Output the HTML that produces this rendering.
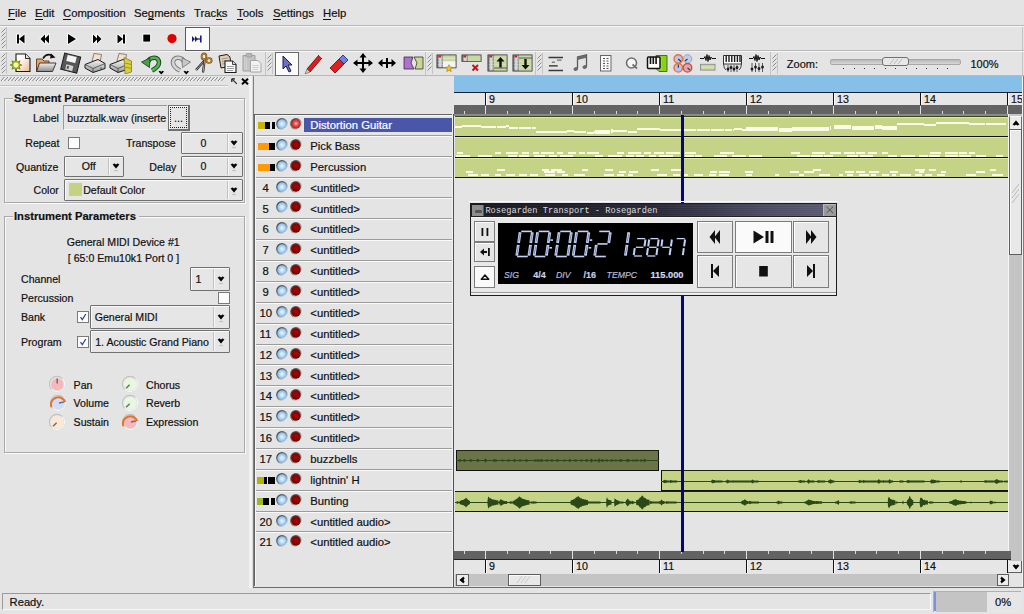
<!DOCTYPE html><html><head><meta charset="utf-8"><style>
html,body{margin:0;padding:0;}
body{width:1024px;height:614px;overflow:hidden;position:relative;background:#e4e4e4;font-family:"Liberation Sans",sans-serif;}
.t{position:absolute;white-space:nowrap;-webkit-text-stroke:0.2px currentColor;}
.r{position:absolute;box-sizing:border-box;}
u{text-decoration:none;border-bottom:1px solid currentColor;}
</style></head><body>
<div class="t" style="left:8.00px;top:5.98px;font-size:11.3px;line-height:15px;font-weight:normal;color:#111;font-family:'Liberation Sans', sans-serif;"><u>F</u>ile</div>
<div class="t" style="left:35.00px;top:5.98px;font-size:11.3px;line-height:15px;font-weight:normal;color:#111;font-family:'Liberation Sans', sans-serif;"><u>E</u>dit</div>
<div class="t" style="left:63.00px;top:5.98px;font-size:11.3px;line-height:15px;font-weight:normal;color:#111;font-family:'Liberation Sans', sans-serif;"><u>C</u>omposition</div>
<div class="t" style="left:134.00px;top:5.98px;font-size:11.3px;line-height:15px;font-weight:normal;color:#111;font-family:'Liberation Sans', sans-serif;">Se<u>g</u>ments</div>
<div class="t" style="left:194.00px;top:5.98px;font-size:11.3px;line-height:15px;font-weight:normal;color:#111;font-family:'Liberation Sans', sans-serif;">Trac<u>k</u>s</div>
<div class="t" style="left:237.00px;top:5.98px;font-size:11.3px;line-height:15px;font-weight:normal;color:#111;font-family:'Liberation Sans', sans-serif;"><u>T</u>ools</div>
<div class="t" style="left:273.00px;top:5.98px;font-size:11.3px;line-height:15px;font-weight:normal;color:#111;font-family:'Liberation Sans', sans-serif;"><u>S</u>ettings</div>
<div class="t" style="left:323.00px;top:5.98px;font-size:11.3px;line-height:15px;font-weight:normal;color:#111;font-family:'Liberation Sans', sans-serif;"><u>H</u>elp</div>
<div class="r" style="left:0px;top:25px;width:1024px;height:1px;background:#b9b9b9;"></div>
<div class="r" style="left:0px;top:26px;width:1024px;height:1px;background:#f6f6f6;"></div>
<div class="r" style="left:0px;top:50px;width:1024px;height:1px;background:#b9b9b9;"></div>
<div class="r" style="left:0px;top:51px;width:1024px;height:1px;background:#f6f6f6;"></div>
<div class="r" style="left:0px;top:75px;width:1024px;height:1px;background:#b9b9b9;"></div>
<svg class="r" style="left:1px;top:28px;" width="5" height="20" viewBox="0 0 5 20"><line x1="0.5" y1="4.5" x2="4.5" y2="0.5" stroke="#8a8a8a" stroke-width="1"/><line x1="0.5" y1="8.5" x2="4.5" y2="4.5" stroke="#8a8a8a" stroke-width="1"/><line x1="0.5" y1="12.5" x2="4.5" y2="8.5" stroke="#8a8a8a" stroke-width="1"/><line x1="0.5" y1="16.5" x2="4.5" y2="12.5" stroke="#8a8a8a" stroke-width="1"/><line x1="0.5" y1="20.5" x2="4.5" y2="16.5" stroke="#8a8a8a" stroke-width="1"/></svg>
<div class="r" style="left:6px;top:27px;width:1px;height:22px;background:#c4c4c4;"></div>
<svg class="r" style="left:1px;top:53px;" width="5" height="20" viewBox="0 0 5 20"><line x1="0.5" y1="4.5" x2="4.5" y2="0.5" stroke="#8a8a8a" stroke-width="1"/><line x1="0.5" y1="8.5" x2="4.5" y2="4.5" stroke="#8a8a8a" stroke-width="1"/><line x1="0.5" y1="12.5" x2="4.5" y2="8.5" stroke="#8a8a8a" stroke-width="1"/><line x1="0.5" y1="16.5" x2="4.5" y2="12.5" stroke="#8a8a8a" stroke-width="1"/><line x1="0.5" y1="20.5" x2="4.5" y2="16.5" stroke="#8a8a8a" stroke-width="1"/></svg>
<div class="r" style="left:6px;top:52px;width:1px;height:22px;background:#c4c4c4;"></div>
<svg class="r" style="left:14px;top:31px;" width="14" height="16" viewBox="0 0 14 16"><g stroke="#fff" stroke-width="2" stroke-linejoin="round" fill="#fff" opacity="0.9"><rect x="3" y="3.5" width="2" height="9"/><path d="M5 8 L10.5 3.5 L10.5 12.5 Z"/></g><g fill="#000"><rect x="3" y="3.5" width="2" height="9"/><path d="M5 8 L10.5 3.5 L10.5 12.5 Z"/></g></svg>
<svg class="r" style="left:38px;top:31px;" width="14" height="16" viewBox="0 0 14 16"><g stroke="#fff" stroke-width="2" stroke-linejoin="round" fill="#fff" opacity="0.9"><path d="M2.5 8 L7 3.5 L7 12.5 Z"/><path d="M6.5 8 L11 3.5 L11 12.5 Z"/></g><g fill="#000"><path d="M2.5 8 L7 3.5 L7 12.5 Z"/><path d="M6.5 8 L11 3.5 L11 12.5 Z"/></g></svg>
<svg class="r" style="left:65px;top:31px;" width="14" height="16" viewBox="0 0 14 16"><g stroke="#fff" stroke-width="2" stroke-linejoin="round" fill="#fff" opacity="0.9"><path d="M3 3 L11 8 L3 13 Z"/></g><g fill="#000"><path d="M3 3 L11 8 L3 13 Z"/></g></svg>
<svg class="r" style="left:90px;top:31px;" width="14" height="16" viewBox="0 0 14 16"><g stroke="#fff" stroke-width="2" stroke-linejoin="round" fill="#fff" opacity="0.9"><path d="M3 3.5 L7.5 8 L3 12.5 Z"/><path d="M7 3.5 L11.5 8 L7 12.5 Z"/></g><g fill="#000"><path d="M3 3.5 L7.5 8 L3 12.5 Z"/><path d="M7 3.5 L11.5 8 L7 12.5 Z"/></g></svg>
<svg class="r" style="left:114px;top:31px;" width="14" height="16" viewBox="0 0 14 16"><g stroke="#fff" stroke-width="2" stroke-linejoin="round" fill="#fff" opacity="0.9"><path d="M3.5 3.5 L9 8 L3.5 12.5 Z"/><rect x="9" y="3.5" width="2" height="9"/></g><g fill="#000"><path d="M3.5 3.5 L9 8 L3.5 12.5 Z"/><rect x="9" y="3.5" width="2" height="9"/></g></svg>
<svg class="r" style="left:140px;top:31px;" width="14" height="16" viewBox="0 0 14 16"><g stroke="#fff" stroke-width="2" stroke-linejoin="round" fill="#fff" opacity="0.9"><rect x="3.3" y="3.6" width="6.8" height="7"/></g><g fill="#000"><rect x="3.3" y="3.6" width="6.8" height="7"/></g></svg>
<svg class="r" style="left:165px;top:31px;" width="14" height="16" viewBox="0 0 14 16"><circle cx="7" cy="7.6" r="4.6" fill="#e00000"/></svg>
<div class="r" style="left:185px;top:27px;width:25px;height:23.5px;background:#fafafa;border:1px solid #5a5a5a;"></div>
<svg class="r" style="left:190px;top:32px;" width="16" height="14" viewBox="0 0 16 14"><path d="M2 4 L5 7 L2 10 Z M5 4 L8 7 L5 10 Z" fill="#1a2070"/><rect x="5" y="7" width="6" height="0.01"/><line x1="6" y1="7" x2="10" y2="7" stroke="#1a2070" stroke-width="1.2"/><rect x="10" y="3.5" width="1.6" height="7" fill="#1a2070"/></svg>
<svg class="r" style="left:10px;top:52px;" width="22" height="22" viewBox="0 0 22 22"><defs><linearGradient id="pg" x1="0" y1="0" x2="1" y2="1"><stop offset="0.3" stop-color="#ffffff"/><stop offset="1" stop-color="#f0b890"/></linearGradient></defs><path d="M6 2 H15.5 L20 6.5 V19.5 H6 Z" fill="url(#pg)" stroke="#1a1a1a" stroke-width="1.1"/><path d="M15.5 2 V6.5 H20" fill="#e8e8e8" stroke="#1a1a1a" stroke-width="0.9"/><polygon points="11.80,13.00 8.96,14.22 10.10,17.10 7.22,15.96 6.00,18.80 4.78,15.96 1.90,17.10 3.04,14.22 0.20,13.00 3.04,11.78 1.90,8.90 4.78,10.04 6.00,7.20 7.22,10.04 10.10,8.90 8.96,11.78" fill="#b8c818" stroke="#5a6a00" stroke-width="0.7"/><circle cx="6" cy="13" r="2.4" fill="#f8ffb0"/></svg>
<svg class="r" style="left:35px;top:52px;" width="22" height="22" viewBox="0 0 22 22"><defs><linearGradient id="fg" x1="0" y1="0" x2="0" y2="1"><stop offset="0" stop-color="#f0f0f0"/><stop offset="1" stop-color="#8a8a8a"/></linearGradient></defs><path d="M1.5 7 H7 L9 9 H14 V18 L1.5 19.5 Z" fill="#e8a464" stroke="#5a3a1a" stroke-width="0.9"/><path d="M4.5 11 H21 L17.5 19.5 H1.5 Z" fill="url(#fg)" stroke="#2a2a2a" stroke-width="0.9"/><path d="M8 6.5 Q12 0.5 17.5 4" stroke="#111" stroke-width="1.6" fill="none"/><path d="M16 1.5 L20.5 5.5 L15 6.5 Z" fill="#111"/></svg>
<svg class="r" style="left:60px;top:52px;" width="22" height="22" viewBox="0 0 22 22"><g transform="rotate(14 11 11)"><rect x="2.5" y="3" width="16.5" height="16.5" fill="#585858" stroke="#1a1a1a" stroke-width="1"/><rect x="5.5" y="3.5" width="10" height="7" fill="#f4f4f4" stroke="#333" stroke-width="0.5"/><rect x="6.5" y="13" width="8" height="6" fill="#d4d4d4" stroke="#333" stroke-width="0.5"/><rect x="8" y="14.5" width="2" height="3" fill="#555"/></g></svg>
<svg class="r" style="left:84px;top:52px;" width="24" height="22" viewBox="0 0 24 22"><defs><linearGradient id="prg" x1="0" y1="0" x2="0" y2="1"><stop offset="0" stop-color="#f4f4f4"/><stop offset="1" stop-color="#9a9a9a"/></linearGradient></defs><path d="M8 9 L10 1.5 L17.5 2.5 L16 10.5 Z" fill="#f6e0c8" stroke="#6a6a6a" stroke-width="0.8"/><path d="M1 12.5 L14 7.5 L21 11.5 L21 16.5 L9 20.5 L1 16 Z" fill="url(#prg)" stroke="#1a1a1a" stroke-width="1"/><path d="M1 12.5 L9 16.5 L21 11.5 M9 16.5 V20.5" stroke="#444" stroke-width="0.8" fill="none"/><rect x="16" y="15.5" width="2" height="1.3" fill="#20a040"/></svg>
<svg class="r" style="left:109px;top:52px;" width="24" height="22" viewBox="0 0 24 22"><defs><linearGradient id="prg" x1="0" y1="0" x2="0" y2="1"><stop offset="0" stop-color="#f4f4f4"/><stop offset="1" stop-color="#9a9a9a"/></linearGradient></defs><path d="M8 9 L10 1.5 L17.5 2.5 L16 10.5 Z" fill="#f6e0c8" stroke="#6a6a6a" stroke-width="0.8"/><path d="M1 12.5 L14 7.5 L21 11.5 L21 16.5 L9 20.5 L1 16 Z" fill="url(#prg)" stroke="#1a1a1a" stroke-width="1"/><path d="M1 12.5 L9 16.5 L21 11.5 M9 16.5 V20.5" stroke="#444" stroke-width="0.8" fill="none"/><rect x="16" y="15.5" width="2" height="1.3" fill="#20a040"/><path d="M15 5.5 L22.5 9 V20 L16 22 Z" fill="#d8d040" stroke="#7a7010" stroke-width="0.7"/><path d="M16 11 L22.5 12.5 M16 15 L22.5 16.5" stroke="#8a8010" stroke-width="0.7"/></svg>
<svg class="r" style="left:140px;top:53px;" width="26" height="23" viewBox="0 0 26 23"><path d="M7.5 9.5 C10 3 19.5 3 19 10 C18.5 14 15 16 12 17.5" stroke="#1a4a1a" stroke-width="4.6" fill="none"/><path d="M7.5 9.5 C10 3 19.5 3 19 10 C18.5 14 15 16 12 17.5" stroke="#58b058" stroke-width="2.6" fill="none"/><path d="M1.5 9 L10 5 L9.5 14.5 Z" fill="#48a048" stroke="#1a4a1a" stroke-width="0.9" stroke-linejoin="round"/><path d="M18.5 18.6 L20 17.8 L21.3 18.8 L22.6 17.8 L24 18.6 L21.3 21.6 Z" fill="#000"/></svg>
<svg class="r" style="left:166px;top:53px;" width="26" height="23" viewBox="0 0 26 23"><path d="M18.5 9.5 C16 3 6.5 3 7 10 C7.5 14 11 16 14 17.5" stroke="#7a7a7a" stroke-width="4.6" fill="none"/><path d="M18.5 9.5 C16 3 6.5 3 7 10 C7.5 14 11 16 14 17.5" stroke="#d4d4d4" stroke-width="2.6" fill="none"/><path d="M24.5 9 L16 5 L16.5 14.5 Z" fill="#c8c8c8" stroke="#7a7a7a" stroke-width="0.9" stroke-linejoin="round"/><path d="M17.5 18.6 L19 17.8 L20.3 18.8 L21.6 17.8 L23 18.6 L20.3 21.6 Z" fill="#000"/></svg>
<svg class="r" style="left:193px;top:52px;" width="20" height="22" viewBox="0 0 20 22"><path d="M3 18 L12 8" stroke="#1a1a1a" stroke-width="2.2"/><path d="M3 18 L12 8" stroke="#d8d8d8" stroke-width="0.8"/><path d="M10 20.5 L11.5 9" stroke="#1a1a1a" stroke-width="2.2"/><path d="M10 20.5 L11.5 9" stroke="#c8c8c8" stroke-width="0.8"/><ellipse cx="11" cy="4.5" rx="2.4" ry="3" fill="none" stroke="#7a4a08" stroke-width="1.8"/><ellipse cx="16" cy="8.5" rx="2.6" ry="2.4" fill="none" stroke="#7a4a08" stroke-width="1.8"/><ellipse cx="11" cy="4.5" rx="2.4" ry="3" fill="none" stroke="#d8a040" stroke-width="0.7"/><ellipse cx="16" cy="8.5" rx="2.6" ry="2.4" fill="none" stroke="#d8a040" stroke-width="0.7"/></svg>
<svg class="r" style="left:217px;top:53px;" width="22" height="22" viewBox="0 0 22 22"><path d="M2 3 L10 1.5 L13 4 L14 13 L4 15 Z" fill="#e0d0b8" stroke="#1a1a1a" stroke-width="1"/><path d="M4.5 6 L11 5 M5 8.5 L11.5 7.5 M5 11 L12 10" stroke="#8a7a6a" stroke-width="0.7"/><path d="M8 8 H15.5 L19 11.5 V19.5 H8 Z" fill="#fafafa" stroke="#1a1a1a" stroke-width="1.1"/><path d="M15.5 8 V11.5 H19" fill="#ddd" stroke="#1a1a1a" stroke-width="0.8"/><path d="M10 13.5 H17 M10 15.5 H17 M10 17.5 H16" stroke="#777" stroke-width="0.7"/></svg>
<svg class="r" style="left:241px;top:52px;" width="22" height="22" viewBox="0 0 22 22"><path d="M2 3.5 H14 V19 H2 Z" fill="#c4c4c4" stroke="#a0a0a0" stroke-width="1"/><rect x="5" y="1.5" width="6" height="3.5" rx="1" fill="#b8b8b8" stroke="#999" stroke-width="0.8"/><path d="M3.5 5 V18 M5.5 5 V18" stroke="#d8d8d8" stroke-width="0.7"/><path d="M9.5 8.5 H17 L20 11.5 V20 H9.5 Z" fill="#f2f2f2" stroke="#a4a4a4" stroke-width="1"/><path d="M11.5 13.5 H18 M11.5 15.5 H18 M11.5 17.5 H17" stroke="#c0c0c0" stroke-width="0.7"/></svg>
<div class="r" style="left:265px;top:52px;width:1px;height:23px;background:#c4c4c4;"></div>
<svg class="r" style="left:267px;top:54px;" width="5" height="19" viewBox="0 0 5 19"><line x1="0.5" y1="4.5" x2="4.5" y2="0.5" stroke="#8a8a8a" stroke-width="1"/><line x1="0.5" y1="8.5" x2="4.5" y2="4.5" stroke="#8a8a8a" stroke-width="1"/><line x1="0.5" y1="12.5" x2="4.5" y2="8.5" stroke="#8a8a8a" stroke-width="1"/><line x1="0.5" y1="16.5" x2="4.5" y2="12.5" stroke="#8a8a8a" stroke-width="1"/></svg>
<div class="r" style="left:272px;top:53px;width:1px;height:21px;background:#c4c4c4;"></div>
<div class="r" style="left:275px;top:52px;width:24px;height:24px;background:#fbfbfb;border:1px solid #6a6a6a;"></div>
<svg class="r" style="left:276px;top:52px;" width="22" height="22" viewBox="0 0 22 22"><path d="M7 4 L7 17 L10 14 L13 20 L15 19 L12 13 L16 13 Z" fill="#6a70c8" stroke="#1a1a40" stroke-width="1" stroke-linejoin="round"/></svg>
<svg class="r" style="left:302px;top:52px;" width="22" height="22" viewBox="0 0 22 22"><path d="M5 17 L17 3 L20 6 L8 20 Z" fill="#d82020" stroke="#6a0000" stroke-width="0.8"/><path d="M5 17 L8 20 L3 22 Z" fill="#e8c8a0" stroke="#555" stroke-width="0.6"/><path d="M17 3 L20 6" stroke="#fff" stroke-width="0.8"/></svg>
<svg class="r" style="left:327px;top:52px;" width="22" height="22" viewBox="0 0 22 22"><path d="M3 16 L12 7 L17 12 L8 21 Z" fill="#e02020" stroke="#700" stroke-width="0.8"/><path d="M12 7 L16 3 L21 8 L17 12 Z" fill="#7080e8" stroke="#223" stroke-width="0.8"/></svg>
<svg class="r" style="left:352px;top:52px;" width="22" height="22" viewBox="0 0 22 22"><path d="M11 2 V20 M2 11 H20" stroke="#000" stroke-width="2"/><path d="M11 1 L7.5 5.5 H14.5 Z M11 21 L7.5 16.5 H14.5 Z M1 11 L5.5 7.5 V14.5 Z M21 11 L16.5 7.5 V14.5 Z" fill="#000"/></svg>
<svg class="r" style="left:376px;top:52px;" width="22" height="22" viewBox="0 0 22 22"><path d="M3 11 H19" stroke="#000" stroke-width="2"/><path d="M2 11 L6.5 7 V15 Z M20 11 L15.5 7 V15 Z" fill="#000"/><path d="M11 6 V16" stroke="#000" stroke-width="2"/></svg>
<svg class="r" style="left:402px;top:52px;" width="22" height="22" viewBox="0 0 22 22"><path d="M2 5 H11 L9 11 L12 17 H2 Z" fill="#b070d0" stroke="#333" stroke-width="0.8"/><path d="M12 5 H21 V17 H13 L15 11 Z" fill="#c8d890" stroke="#333" stroke-width="0.8"/></svg>
<div class="r" style="left:425px;top:52px;width:1px;height:23px;background:#c4c4c4;"></div>
<svg class="r" style="left:427px;top:54px;" width="5" height="19" viewBox="0 0 5 19"><line x1="0.5" y1="4.5" x2="4.5" y2="0.5" stroke="#8a8a8a" stroke-width="1"/><line x1="0.5" y1="8.5" x2="4.5" y2="4.5" stroke="#8a8a8a" stroke-width="1"/><line x1="0.5" y1="12.5" x2="4.5" y2="8.5" stroke="#8a8a8a" stroke-width="1"/><line x1="0.5" y1="16.5" x2="4.5" y2="12.5" stroke="#8a8a8a" stroke-width="1"/></svg>
<div class="r" style="left:432px;top:53px;width:1px;height:21px;background:#c4c4c4;"></div>
<svg class="r" style="left:436px;top:54px;" width="22" height="22" viewBox="0 0 22 22"><defs><linearGradient id="tg" x1="0" y1="0" x2="1" y2="0"><stop offset="0" stop-color="#5a5a5a"/><stop offset="0.5" stop-color="#e8e8e8"/><stop offset="1" stop-color="#8a8a8a"/></linearGradient></defs><rect x="1" y="1.0" width="6" height="3" fill="url(#tg)"/><rect x="1" y="4.2" width="6" height="3" fill="url(#tg)"/><rect x="1" y="7.4" width="6" height="3" fill="url(#tg)"/><rect x="1" y="10.6" width="6" height="3" fill="url(#tg)"/><rect x="1" y="1" width="19" height="12.8" fill="none" stroke="#5a5a5a" stroke-width="0.8"/><rect x="2.5" y="1.3" width="2.5" height="2.2" fill="#d02020"/><rect x="7" y="1" width="13" height="6.4" fill="#c8d8a0"/><path d="M7 4.2 H20" stroke="#e8f0d0" stroke-width="0.8"/><rect x="7" y="7.4" width="13" height="6.4" fill="#f4f4f4"/><rect x="1" y="1" width="19" height="12.8" fill="none" stroke="#5a5a5a" stroke-width="0.8"/><polygon points="16.80,14.50 14.46,15.56 14.17,18.11 12.44,16.21 9.93,16.73 11.20,14.50 9.93,12.27 12.44,12.79 14.17,10.89 14.46,13.44" fill="#f0c020" stroke="#a07000" stroke-width="0.5" transform="rotate(-18 13 14.5)"/></svg>
<svg class="r" style="left:461px;top:54px;" width="22" height="22" viewBox="0 0 22 22"><defs><linearGradient id="tg" x1="0" y1="0" x2="1" y2="0"><stop offset="0" stop-color="#5a5a5a"/><stop offset="0.5" stop-color="#e8e8e8"/><stop offset="1" stop-color="#8a8a8a"/></linearGradient></defs><rect x="1" y="1.0" width="6" height="3" fill="url(#tg)"/><rect x="1" y="4.2" width="6" height="3" fill="url(#tg)"/><rect x="1" y="1" width="19" height="6.4" fill="none" stroke="#5a5a5a" stroke-width="0.8"/><rect x="2.5" y="1.3" width="2.5" height="2.2" fill="#d02020"/><rect x="7" y="1" width="13" height="6.4" fill="#c8d8a0"/><rect x="1" y="1" width="19" height="6.4" fill="none" stroke="#5a5a5a" stroke-width="0.8"/><path d="M11.5 11 L17 16.5 M17 11 L11.5 16.5" stroke="#d01010" stroke-width="2"/></svg>
<svg class="r" style="left:487px;top:54px;" width="22" height="20" viewBox="0 0 22 20"><defs><linearGradient id="tg" x1="0" y1="0" x2="1" y2="0"><stop offset="0" stop-color="#5a5a5a"/><stop offset="0.5" stop-color="#e8e8e8"/><stop offset="1" stop-color="#8a8a8a"/></linearGradient></defs><rect x="1" y="1.0" width="6" height="3" fill="url(#tg)"/><rect x="1" y="4.2" width="6" height="3" fill="url(#tg)"/><rect x="1" y="7.4" width="6" height="3" fill="url(#tg)"/><rect x="1" y="10.6" width="6" height="3" fill="url(#tg)"/><rect x="1" y="13.8" width="6" height="3" fill="url(#tg)"/><rect x="1" y="1" width="19" height="16.0" fill="none" stroke="#5a5a5a" stroke-width="0.8"/><rect x="2.5" y="1.3" width="2.5" height="2.2" fill="#d02020"/><rect x="7" y="1" width="13" height="16" fill="#c8d8a0"/><path d="M7 4.2 H20 M7 7.4 H20 M7 10.6 H20 M7 13.8 H20" stroke="#d8e4b8" stroke-width="0.6"/><rect x="1" y="1" width="19" height="16" fill="none" stroke="#5a5a5a" stroke-width="0.8"/><path d="M13.5 3 L9.5 7.5 H12.3 V13.5 H14.7 V7.5 H17.5 Z" fill="#111"/><path d="M7 14 H20" stroke="#333" stroke-width="0.8"/></svg>
<svg class="r" style="left:512px;top:54px;" width="22" height="20" viewBox="0 0 22 20"><defs><linearGradient id="tg" x1="0" y1="0" x2="1" y2="0"><stop offset="0" stop-color="#5a5a5a"/><stop offset="0.5" stop-color="#e8e8e8"/><stop offset="1" stop-color="#8a8a8a"/></linearGradient></defs><rect x="1" y="1.0" width="6" height="3" fill="url(#tg)"/><rect x="1" y="4.2" width="6" height="3" fill="url(#tg)"/><rect x="1" y="7.4" width="6" height="3" fill="url(#tg)"/><rect x="1" y="10.6" width="6" height="3" fill="url(#tg)"/><rect x="1" y="13.8" width="6" height="3" fill="url(#tg)"/><rect x="1" y="1" width="19" height="16.0" fill="none" stroke="#5a5a5a" stroke-width="0.8"/><rect x="2.5" y="1.3" width="2.5" height="2.2" fill="#d02020"/><rect x="7" y="1" width="13" height="16" fill="#c8d8a0"/><path d="M7 4.2 H20 M7 7.4 H20 M7 10.6 H20 M7 13.8 H20" stroke="#d8e4b8" stroke-width="0.6"/><rect x="1" y="1" width="19" height="16" fill="none" stroke="#5a5a5a" stroke-width="0.8"/><path d="M13.5 15.5 L9.5 11 H12.3 V5 H14.7 V11 H17.5 Z" fill="#111"/><path d="M7 4 H20" stroke="#333" stroke-width="0.8"/></svg>
<div class="r" style="left:535px;top:52px;width:1px;height:23px;background:#c4c4c4;"></div>
<svg class="r" style="left:537px;top:54px;" width="5" height="19" viewBox="0 0 5 19"><line x1="0.5" y1="4.5" x2="4.5" y2="0.5" stroke="#8a8a8a" stroke-width="1"/><line x1="0.5" y1="8.5" x2="4.5" y2="4.5" stroke="#8a8a8a" stroke-width="1"/><line x1="0.5" y1="12.5" x2="4.5" y2="8.5" stroke="#8a8a8a" stroke-width="1"/><line x1="0.5" y1="16.5" x2="4.5" y2="12.5" stroke="#8a8a8a" stroke-width="1"/></svg>
<div class="r" style="left:542px;top:53px;width:1px;height:21px;background:#c4c4c4;"></div>
<svg class="r" style="left:546px;top:52px;" width="20" height="22" viewBox="0 0 20 22"><path d="M2.5 5.5 H17 M2.5 18.5 H17" stroke="#3a3a3a" stroke-width="1.4"/><rect x="11" y="7.5" width="4.5" height="1.3" fill="#777"/><rect x="5.8" y="9.6" width="3.2" height="1.2" fill="#666"/><rect x="3" y="13" width="8.7" height="1.7" fill="#555"/></svg>
<svg class="r" style="left:572px;top:52px;" width="18" height="22" viewBox="0 0 18 22"><path d="M5.5 16.5 V5 L14.5 2.8 V14.5" stroke="#5a5a5a" stroke-width="1.3" fill="none"/><path d="M5.5 5 L14.5 2.8 V5.8 L5.5 8 Z" fill="#6a6a6a"/><ellipse cx="3.8" cy="17" rx="2.4" ry="1.8" fill="#6a6a6a" transform="rotate(-20 3.8 17)"/><ellipse cx="12.8" cy="15" rx="2.4" ry="1.8" fill="#6a6a6a" transform="rotate(-20 12.8 15)"/></svg>
<svg class="r" style="left:598px;top:52px;" width="16" height="22" viewBox="0 0 16 22"><rect x="2.5" y="3.5" width="10.5" height="15.5" fill="#fafafa" stroke="#666" stroke-width="1"/><path d="M5 6.5 H7 M8.5 6.5 H10.5 M5 9 H7 M8.5 9 H10.5 M5 11.5 H7 M9 11.5 H10.5 M5 14 H7 M8.5 14 H10.5 M5 16.5 H7 M8.5 16.5 H10.5" stroke="#555" stroke-width="1.1"/></svg>
<svg class="r" style="left:622px;top:52px;" width="18" height="22" viewBox="0 0 18 22"><circle cx="9.5" cy="11" r="5" fill="#f6f6f6" stroke="#707070" stroke-width="1.6"/><path d="M10.5 12.5 L15 16.5" stroke="#707070" stroke-width="1.8"/></svg>
<svg class="r" style="left:646px;top:52px;" width="22" height="22" viewBox="0 0 22 22"><path d="M10 3.5 H21 V19.5 H13 L10.5 17 Z" fill="#8ad01a" stroke="#3a6a08" stroke-width="0.9"/><path d="M12 5 V18 M15 5 V18" stroke="#b8f040" stroke-width="0.8"/><rect x="1.5" y="5" width="12.5" height="11.5" rx="1" fill="#fff" stroke="#111" stroke-width="1.5"/><path d="M4.5 5 V12 M7.3 5 V12 M10.1 5 V12" stroke="#111" stroke-width="1.6"/></svg>
<svg class="r" style="left:672px;top:52px;" width="22" height="22" viewBox="0 0 22 22"><circle cx="6.3" cy="7" r="4.3" fill="#b8c4e8" stroke="#e8703a" stroke-width="1.4"/><circle cx="15.5" cy="7" r="4.3" fill="#c0cce8" stroke="#9aa4c0" stroke-width="1"/><circle cx="6.3" cy="15.8" r="4.3" fill="#b8c4e8" stroke="#e8703a" stroke-width="1.4"/><circle cx="15.5" cy="15.8" r="4.3" fill="#d8a8b8" stroke="#e04a3a" stroke-width="1.4"/><path d="M6.3 7 L9 9.5 M15.5 7 L13 9 M6.3 15.8 L6.3 12.5 M15.5 15.8 L18 18" stroke="#333" stroke-width="1.1"/></svg>
<svg class="r" style="left:699px;top:52px;" width="18" height="22" viewBox="0 0 18 22"><path d="M1 6.5 H5 L6 4.5 L7 8.5 L8 2.5 L9 9.5 L10 3.5 L11 8 L12 5 L13 6.5 H17" stroke="#111" stroke-width="1" fill="none"/><rect x="1.5" y="12.3" width="14.5" height="5.8" fill="#c8d8a0" stroke="#8a8a8a" stroke-width="0.9"/><path d="M2 15.2 H15.5" stroke="#e0ecc8" stroke-width="0.8"/></svg>
<svg class="r" style="left:722px;top:52px;" width="22" height="22" viewBox="0 0 22 22"><path d="M1.5 3.5 H19.5 V12 H1.5 Z" fill="#fff" stroke="#333" stroke-width="1"/><path d="M4.2 3.5 V10 M7 3.5 V10 M9.8 3.5 V10 M12.6 3.5 V10 M15.4 3.5 V10 M18 3.5 V10" stroke="#1a1a1a" stroke-width="1.4"/><path d="M1.5 12 Q2 17 4 18 M19.5 12 Q19 17 17 18" stroke="#333" stroke-width="0.9" fill="none"/><path d="M6 13 V20 M9 13 V20 M12 13 V20 M15 13 V20" stroke="#333" stroke-width="0.8"/><ellipse cx="6" cy="17" rx="1.4" ry="1.6" fill="#1a1a1a"/><ellipse cx="9" cy="15.5" rx="1.4" ry="1.6" fill="#1a1a1a"/><ellipse cx="12" cy="17" rx="1.4" ry="1.6" fill="#1a1a1a"/><ellipse cx="15" cy="15.5" rx="1.4" ry="1.6" fill="#1a1a1a"/></svg>
<svg class="r" style="left:748px;top:52px;" width="20" height="22" viewBox="0 0 20 22"><path d="M1 6.5 H5 L6 4.5 L7 8.5 L8 2.5 L9 9.5 L10 3.5 L11 8 L12 5 L13 6.5 H17" stroke="#111" stroke-width="1" fill="none"/><path d="M4 11 V20 M7.5 11 V20 M11 11 V20 M14.5 11 V20" stroke="#333" stroke-width="0.8"/><ellipse cx="4" cy="17" rx="1.4" ry="1.6" fill="#1a1a1a"/><ellipse cx="7.5" cy="15" rx="1.4" ry="1.6" fill="#1a1a1a"/><ellipse cx="11" cy="16.5" rx="1.4" ry="1.6" fill="#1a1a1a"/><ellipse cx="14.5" cy="15" rx="1.4" ry="1.6" fill="#1a1a1a"/></svg>
<div class="r" style="left:770px;top:52px;width:1px;height:23px;background:#c4c4c4;"></div>
<svg class="r" style="left:772px;top:54px;" width="5" height="19" viewBox="0 0 5 19"><line x1="0.5" y1="4.5" x2="4.5" y2="0.5" stroke="#8a8a8a" stroke-width="1"/><line x1="0.5" y1="8.5" x2="4.5" y2="4.5" stroke="#8a8a8a" stroke-width="1"/><line x1="0.5" y1="12.5" x2="4.5" y2="8.5" stroke="#8a8a8a" stroke-width="1"/><line x1="0.5" y1="16.5" x2="4.5" y2="12.5" stroke="#8a8a8a" stroke-width="1"/></svg>
<div class="r" style="left:777px;top:53px;width:1px;height:21px;background:#c4c4c4;"></div>
<div class="t" style="left:786.80px;top:57.39px;font-size:11.0px;line-height:14px;font-weight:normal;color:#111;font-family:'Liberation Sans', sans-serif;">Zoom:</div>
<div class="r" style="left:830px;top:59px;width:131px;height:6px;background:#c8c8c8;border:1px solid #a8a8a8;border-radius:2px;background:linear-gradient(#b8b8b8,#d8d8d8);"></div>
<div class="r" style="left:882px;top:57px;width:27px;height:9px;background:#e8e8e8;border:1px solid #707070;border-radius:3px;"></div>
<svg class="r" style="left:886px;top:58px;" width="20" height="7" viewBox="0 0 20 7"><path d="M4 6 L8 1 M8 6 L12 1 M12 6 L16 1" stroke="#aaa" stroke-width="0.8"/></svg>
<div class="r" style="left:843px;top:68px;width:1px;height:1px;background:#333;"></div>
<div class="r" style="left:854px;top:68px;width:1px;height:1px;background:#333;"></div>
<div class="r" style="left:864px;top:68px;width:1px;height:1px;background:#333;"></div>
<div class="r" style="left:874px;top:68px;width:1px;height:1px;background:#333;"></div>
<div class="r" style="left:885px;top:68px;width:1px;height:1px;background:#333;"></div>
<div class="r" style="left:895px;top:68px;width:1px;height:1px;background:#333;"></div>
<div class="r" style="left:906px;top:68px;width:1px;height:1px;background:#333;"></div>
<div class="r" style="left:916px;top:68px;width:1px;height:1px;background:#333;"></div>
<div class="r" style="left:926px;top:68px;width:1px;height:1px;background:#333;"></div>
<div class="r" style="left:937px;top:68px;width:1px;height:1px;background:#333;"></div>
<div class="r" style="left:947px;top:68px;width:1px;height:1px;background:#333;"></div>
<div class="t" style="left:970.50px;top:56.69px;font-size:11.0px;line-height:14px;font-weight:normal;color:#111;font-family:'Liberation Sans', sans-serif;">100%</div>
<div class="r" style="left:1022px;top:27px;width:1px;height:23px;background:#c4c4c4;"></div>
<div class="r" style="left:1022px;top:52px;width:1px;height:23px;background:#c4c4c4;"></div>
<svg class="r" style="left:1px;top:77px;" width="224" height="4" viewBox="0 0 224 4"><line x1="1.0" y1="4" x2="4.5" y2="0" stroke="#fafafa" stroke-width="1"/><line x1="0.0" y1="4" x2="3.5" y2="0" stroke="#808080" stroke-width="1"/><line x1="4.5" y1="4" x2="8.0" y2="0" stroke="#fafafa" stroke-width="1"/><line x1="3.5" y1="4" x2="7.0" y2="0" stroke="#808080" stroke-width="1"/><line x1="8.0" y1="4" x2="11.5" y2="0" stroke="#fafafa" stroke-width="1"/><line x1="7.0" y1="4" x2="10.5" y2="0" stroke="#808080" stroke-width="1"/><line x1="11.5" y1="4" x2="15.0" y2="0" stroke="#fafafa" stroke-width="1"/><line x1="10.5" y1="4" x2="14.0" y2="0" stroke="#808080" stroke-width="1"/><line x1="15.0" y1="4" x2="18.5" y2="0" stroke="#fafafa" stroke-width="1"/><line x1="14.0" y1="4" x2="17.5" y2="0" stroke="#808080" stroke-width="1"/><line x1="18.5" y1="4" x2="22.0" y2="0" stroke="#fafafa" stroke-width="1"/><line x1="17.5" y1="4" x2="21.0" y2="0" stroke="#808080" stroke-width="1"/><line x1="22.0" y1="4" x2="25.5" y2="0" stroke="#fafafa" stroke-width="1"/><line x1="21.0" y1="4" x2="24.5" y2="0" stroke="#808080" stroke-width="1"/><line x1="25.5" y1="4" x2="29.0" y2="0" stroke="#fafafa" stroke-width="1"/><line x1="24.5" y1="4" x2="28.0" y2="0" stroke="#808080" stroke-width="1"/><line x1="29.0" y1="4" x2="32.5" y2="0" stroke="#fafafa" stroke-width="1"/><line x1="28.0" y1="4" x2="31.5" y2="0" stroke="#808080" stroke-width="1"/><line x1="32.5" y1="4" x2="36.0" y2="0" stroke="#fafafa" stroke-width="1"/><line x1="31.5" y1="4" x2="35.0" y2="0" stroke="#808080" stroke-width="1"/><line x1="36.0" y1="4" x2="39.5" y2="0" stroke="#fafafa" stroke-width="1"/><line x1="35.0" y1="4" x2="38.5" y2="0" stroke="#808080" stroke-width="1"/><line x1="39.5" y1="4" x2="43.0" y2="0" stroke="#fafafa" stroke-width="1"/><line x1="38.5" y1="4" x2="42.0" y2="0" stroke="#808080" stroke-width="1"/><line x1="43.0" y1="4" x2="46.5" y2="0" stroke="#fafafa" stroke-width="1"/><line x1="42.0" y1="4" x2="45.5" y2="0" stroke="#808080" stroke-width="1"/><line x1="46.5" y1="4" x2="50.0" y2="0" stroke="#fafafa" stroke-width="1"/><line x1="45.5" y1="4" x2="49.0" y2="0" stroke="#808080" stroke-width="1"/><line x1="50.0" y1="4" x2="53.5" y2="0" stroke="#fafafa" stroke-width="1"/><line x1="49.0" y1="4" x2="52.5" y2="0" stroke="#808080" stroke-width="1"/><line x1="53.5" y1="4" x2="57.0" y2="0" stroke="#fafafa" stroke-width="1"/><line x1="52.5" y1="4" x2="56.0" y2="0" stroke="#808080" stroke-width="1"/><line x1="57.0" y1="4" x2="60.5" y2="0" stroke="#fafafa" stroke-width="1"/><line x1="56.0" y1="4" x2="59.5" y2="0" stroke="#808080" stroke-width="1"/><line x1="60.5" y1="4" x2="64.0" y2="0" stroke="#fafafa" stroke-width="1"/><line x1="59.5" y1="4" x2="63.0" y2="0" stroke="#808080" stroke-width="1"/><line x1="64.0" y1="4" x2="67.5" y2="0" stroke="#fafafa" stroke-width="1"/><line x1="63.0" y1="4" x2="66.5" y2="0" stroke="#808080" stroke-width="1"/><line x1="67.5" y1="4" x2="71.0" y2="0" stroke="#fafafa" stroke-width="1"/><line x1="66.5" y1="4" x2="70.0" y2="0" stroke="#808080" stroke-width="1"/><line x1="71.0" y1="4" x2="74.5" y2="0" stroke="#fafafa" stroke-width="1"/><line x1="70.0" y1="4" x2="73.5" y2="0" stroke="#808080" stroke-width="1"/><line x1="74.5" y1="4" x2="78.0" y2="0" stroke="#fafafa" stroke-width="1"/><line x1="73.5" y1="4" x2="77.0" y2="0" stroke="#808080" stroke-width="1"/><line x1="78.0" y1="4" x2="81.5" y2="0" stroke="#fafafa" stroke-width="1"/><line x1="77.0" y1="4" x2="80.5" y2="0" stroke="#808080" stroke-width="1"/><line x1="81.5" y1="4" x2="85.0" y2="0" stroke="#fafafa" stroke-width="1"/><line x1="80.5" y1="4" x2="84.0" y2="0" stroke="#808080" stroke-width="1"/><line x1="85.0" y1="4" x2="88.5" y2="0" stroke="#fafafa" stroke-width="1"/><line x1="84.0" y1="4" x2="87.5" y2="0" stroke="#808080" stroke-width="1"/><line x1="88.5" y1="4" x2="92.0" y2="0" stroke="#fafafa" stroke-width="1"/><line x1="87.5" y1="4" x2="91.0" y2="0" stroke="#808080" stroke-width="1"/><line x1="92.0" y1="4" x2="95.5" y2="0" stroke="#fafafa" stroke-width="1"/><line x1="91.0" y1="4" x2="94.5" y2="0" stroke="#808080" stroke-width="1"/><line x1="95.5" y1="4" x2="99.0" y2="0" stroke="#fafafa" stroke-width="1"/><line x1="94.5" y1="4" x2="98.0" y2="0" stroke="#808080" stroke-width="1"/><line x1="99.0" y1="4" x2="102.5" y2="0" stroke="#fafafa" stroke-width="1"/><line x1="98.0" y1="4" x2="101.5" y2="0" stroke="#808080" stroke-width="1"/><line x1="102.5" y1="4" x2="106.0" y2="0" stroke="#fafafa" stroke-width="1"/><line x1="101.5" y1="4" x2="105.0" y2="0" stroke="#808080" stroke-width="1"/><line x1="106.0" y1="4" x2="109.5" y2="0" stroke="#fafafa" stroke-width="1"/><line x1="105.0" y1="4" x2="108.5" y2="0" stroke="#808080" stroke-width="1"/><line x1="109.5" y1="4" x2="113.0" y2="0" stroke="#fafafa" stroke-width="1"/><line x1="108.5" y1="4" x2="112.0" y2="0" stroke="#808080" stroke-width="1"/><line x1="113.0" y1="4" x2="116.5" y2="0" stroke="#fafafa" stroke-width="1"/><line x1="112.0" y1="4" x2="115.5" y2="0" stroke="#808080" stroke-width="1"/><line x1="116.5" y1="4" x2="120.0" y2="0" stroke="#fafafa" stroke-width="1"/><line x1="115.5" y1="4" x2="119.0" y2="0" stroke="#808080" stroke-width="1"/><line x1="120.0" y1="4" x2="123.5" y2="0" stroke="#fafafa" stroke-width="1"/><line x1="119.0" y1="4" x2="122.5" y2="0" stroke="#808080" stroke-width="1"/><line x1="123.5" y1="4" x2="127.0" y2="0" stroke="#fafafa" stroke-width="1"/><line x1="122.5" y1="4" x2="126.0" y2="0" stroke="#808080" stroke-width="1"/><line x1="127.0" y1="4" x2="130.5" y2="0" stroke="#fafafa" stroke-width="1"/><line x1="126.0" y1="4" x2="129.5" y2="0" stroke="#808080" stroke-width="1"/><line x1="130.5" y1="4" x2="134.0" y2="0" stroke="#fafafa" stroke-width="1"/><line x1="129.5" y1="4" x2="133.0" y2="0" stroke="#808080" stroke-width="1"/><line x1="134.0" y1="4" x2="137.5" y2="0" stroke="#fafafa" stroke-width="1"/><line x1="133.0" y1="4" x2="136.5" y2="0" stroke="#808080" stroke-width="1"/><line x1="137.5" y1="4" x2="141.0" y2="0" stroke="#fafafa" stroke-width="1"/><line x1="136.5" y1="4" x2="140.0" y2="0" stroke="#808080" stroke-width="1"/><line x1="141.0" y1="4" x2="144.5" y2="0" stroke="#fafafa" stroke-width="1"/><line x1="140.0" y1="4" x2="143.5" y2="0" stroke="#808080" stroke-width="1"/><line x1="144.5" y1="4" x2="148.0" y2="0" stroke="#fafafa" stroke-width="1"/><line x1="143.5" y1="4" x2="147.0" y2="0" stroke="#808080" stroke-width="1"/><line x1="148.0" y1="4" x2="151.5" y2="0" stroke="#fafafa" stroke-width="1"/><line x1="147.0" y1="4" x2="150.5" y2="0" stroke="#808080" stroke-width="1"/><line x1="151.5" y1="4" x2="155.0" y2="0" stroke="#fafafa" stroke-width="1"/><line x1="150.5" y1="4" x2="154.0" y2="0" stroke="#808080" stroke-width="1"/><line x1="155.0" y1="4" x2="158.5" y2="0" stroke="#fafafa" stroke-width="1"/><line x1="154.0" y1="4" x2="157.5" y2="0" stroke="#808080" stroke-width="1"/><line x1="158.5" y1="4" x2="162.0" y2="0" stroke="#fafafa" stroke-width="1"/><line x1="157.5" y1="4" x2="161.0" y2="0" stroke="#808080" stroke-width="1"/><line x1="162.0" y1="4" x2="165.5" y2="0" stroke="#fafafa" stroke-width="1"/><line x1="161.0" y1="4" x2="164.5" y2="0" stroke="#808080" stroke-width="1"/><line x1="165.5" y1="4" x2="169.0" y2="0" stroke="#fafafa" stroke-width="1"/><line x1="164.5" y1="4" x2="168.0" y2="0" stroke="#808080" stroke-width="1"/><line x1="169.0" y1="4" x2="172.5" y2="0" stroke="#fafafa" stroke-width="1"/><line x1="168.0" y1="4" x2="171.5" y2="0" stroke="#808080" stroke-width="1"/><line x1="172.5" y1="4" x2="176.0" y2="0" stroke="#fafafa" stroke-width="1"/><line x1="171.5" y1="4" x2="175.0" y2="0" stroke="#808080" stroke-width="1"/><line x1="176.0" y1="4" x2="179.5" y2="0" stroke="#fafafa" stroke-width="1"/><line x1="175.0" y1="4" x2="178.5" y2="0" stroke="#808080" stroke-width="1"/><line x1="179.5" y1="4" x2="183.0" y2="0" stroke="#fafafa" stroke-width="1"/><line x1="178.5" y1="4" x2="182.0" y2="0" stroke="#808080" stroke-width="1"/><line x1="183.0" y1="4" x2="186.5" y2="0" stroke="#fafafa" stroke-width="1"/><line x1="182.0" y1="4" x2="185.5" y2="0" stroke="#808080" stroke-width="1"/><line x1="186.5" y1="4" x2="190.0" y2="0" stroke="#fafafa" stroke-width="1"/><line x1="185.5" y1="4" x2="189.0" y2="0" stroke="#808080" stroke-width="1"/><line x1="190.0" y1="4" x2="193.5" y2="0" stroke="#fafafa" stroke-width="1"/><line x1="189.0" y1="4" x2="192.5" y2="0" stroke="#808080" stroke-width="1"/><line x1="193.5" y1="4" x2="197.0" y2="0" stroke="#fafafa" stroke-width="1"/><line x1="192.5" y1="4" x2="196.0" y2="0" stroke="#808080" stroke-width="1"/><line x1="197.0" y1="4" x2="200.5" y2="0" stroke="#fafafa" stroke-width="1"/><line x1="196.0" y1="4" x2="199.5" y2="0" stroke="#808080" stroke-width="1"/><line x1="200.5" y1="4" x2="204.0" y2="0" stroke="#fafafa" stroke-width="1"/><line x1="199.5" y1="4" x2="203.0" y2="0" stroke="#808080" stroke-width="1"/><line x1="204.0" y1="4" x2="207.5" y2="0" stroke="#fafafa" stroke-width="1"/><line x1="203.0" y1="4" x2="206.5" y2="0" stroke="#808080" stroke-width="1"/><line x1="207.5" y1="4" x2="211.0" y2="0" stroke="#fafafa" stroke-width="1"/><line x1="206.5" y1="4" x2="210.0" y2="0" stroke="#808080" stroke-width="1"/><line x1="211.0" y1="4" x2="214.5" y2="0" stroke="#fafafa" stroke-width="1"/><line x1="210.0" y1="4" x2="213.5" y2="0" stroke="#808080" stroke-width="1"/><line x1="214.5" y1="4" x2="218.0" y2="0" stroke="#fafafa" stroke-width="1"/><line x1="213.5" y1="4" x2="217.0" y2="0" stroke="#808080" stroke-width="1"/><line x1="218.0" y1="4" x2="221.5" y2="0" stroke="#fafafa" stroke-width="1"/><line x1="217.0" y1="4" x2="220.5" y2="0" stroke="#808080" stroke-width="1"/><line x1="221.5" y1="4" x2="225.0" y2="0" stroke="#fafafa" stroke-width="1"/><line x1="220.5" y1="4" x2="224.0" y2="0" stroke="#808080" stroke-width="1"/><line x1="225.0" y1="4" x2="228.5" y2="0" stroke="#fafafa" stroke-width="1"/><line x1="224.0" y1="4" x2="227.5" y2="0" stroke="#808080" stroke-width="1"/></svg>
<div class="r" style="left:0px;top:85px;width:228px;height:1px;background:#c2c2c2;"></div>
<div class="r" style="left:0px;top:86px;width:228px;height:1px;background:#f4f4f4;"></div>
<svg class="r" style="left:231px;top:78px;" width="7" height="7" viewBox="0 0 7 7"><path d="M1.2 1.2 L5.8 5.8" stroke="#222" stroke-width="1.1"/><path d="M0.8 0.8 H4 M0.8 0.8 V4" stroke="#222" stroke-width="1.3" fill="none"/></svg>
<svg class="r" style="left:241px;top:78px;" width="8" height="7" viewBox="0 0 8 7"><path d="M1 0.8 L7 6.2 M7 0.8 L1 6.2" stroke="#000" stroke-width="2"/></svg>
<div class="r" style="left:249px;top:76px;width:3px;height:512px;background:#f2f2f2;"></div>
<div class="r" style="left:252px;top:76px;width:1px;height:512px;background:#dadada;"></div>
<div class="r" style="left:253px;top:76px;width:1px;height:511px;background:#808080;"></div>
<div class="r" style="left:254px;top:114px;width:1px;height:472px;background:#606060;"></div>
<div class="r" style="left:4px;top:98px;width:241px;height:105px;background:none;border:1px solid #a9a9a9;box-shadow:1px 1px 0 #fafafa inset, 1px 1px 0 #fafafa;"></div>
<div class="t" style="left:13.00px;top:91.32px;font-size:11.2px;line-height:15px;font-weight:bold;color:#111;font-family:'Liberation Sans', sans-serif;background:#e4e4e4;padding:0 3px 0 1px;">Segment Parameters</div>
<div class="r" style="left:4px;top:216px;width:241px;height:237px;background:none;border:1px solid #a9a9a9;box-shadow:1px 1px 0 #fafafa inset, 1px 1px 0 #fafafa;"></div>
<div class="t" style="left:13.00px;top:209.32px;font-size:11.2px;line-height:15px;font-weight:bold;color:#111;font-family:'Liberation Sans', sans-serif;background:#e4e4e4;padding:0 3px 0 1px;">Instrument Parameters</div>
<div class="t" style="right:965.10px;top:111.13px;font-size:10.6px;line-height:14px;font-weight:normal;color:#111;font-family:'Liberation Sans', sans-serif;">Label</div>
<div class="r" style="left:63px;top:105px;width:104px;height:25px;background:#e6e6e6;border-top:1px solid #9a9a9a;border-left:1px solid #9a9a9a;border-bottom:1px solid #f6f6f6;"></div>
<div class="t" style="left:67.30px;top:111.13px;font-size:10.6px;line-height:14px;font-weight:normal;color:#111;font-family:'Liberation Sans', sans-serif;">buzztalk.wav (inserte</div>
<div class="r" style="left:168px;top:105px;width:21.5px;height:25.5px;background:#e6e6e6;border:1px solid #707070;border-right-width:2px;border-bottom-width:2px;box-shadow:inset 1px 1px 0 #fafafa;"></div>
<svg class="r" style="left:170px;top:107px;" width="17" height="21" viewBox="0 0 17 21"><rect x="0" y="0" width="1" height="1" fill="#222"/><rect x="0" y="20" width="1" height="1" fill="#222"/><rect x="2" y="0" width="1" height="1" fill="#222"/><rect x="2" y="20" width="1" height="1" fill="#222"/><rect x="4" y="0" width="1" height="1" fill="#222"/><rect x="4" y="20" width="1" height="1" fill="#222"/><rect x="6" y="0" width="1" height="1" fill="#222"/><rect x="6" y="20" width="1" height="1" fill="#222"/><rect x="8" y="0" width="1" height="1" fill="#222"/><rect x="8" y="20" width="1" height="1" fill="#222"/><rect x="10" y="0" width="1" height="1" fill="#222"/><rect x="10" y="20" width="1" height="1" fill="#222"/><rect x="12" y="0" width="1" height="1" fill="#222"/><rect x="12" y="20" width="1" height="1" fill="#222"/><rect x="14" y="0" width="1" height="1" fill="#222"/><rect x="14" y="20" width="1" height="1" fill="#222"/><rect x="16" y="0" width="1" height="1" fill="#222"/><rect x="16" y="20" width="1" height="1" fill="#222"/><rect x="0" y="0" width="1" height="1" fill="#222"/><rect x="16" y="0" width="1" height="1" fill="#222"/><rect x="0" y="2" width="1" height="1" fill="#222"/><rect x="16" y="2" width="1" height="1" fill="#222"/><rect x="0" y="4" width="1" height="1" fill="#222"/><rect x="16" y="4" width="1" height="1" fill="#222"/><rect x="0" y="6" width="1" height="1" fill="#222"/><rect x="16" y="6" width="1" height="1" fill="#222"/><rect x="0" y="8" width="1" height="1" fill="#222"/><rect x="16" y="8" width="1" height="1" fill="#222"/><rect x="0" y="10" width="1" height="1" fill="#222"/><rect x="16" y="10" width="1" height="1" fill="#222"/><rect x="0" y="12" width="1" height="1" fill="#222"/><rect x="16" y="12" width="1" height="1" fill="#222"/><rect x="0" y="14" width="1" height="1" fill="#222"/><rect x="16" y="14" width="1" height="1" fill="#222"/><rect x="0" y="16" width="1" height="1" fill="#222"/><rect x="16" y="16" width="1" height="1" fill="#222"/><rect x="0" y="18" width="1" height="1" fill="#222"/><rect x="16" y="18" width="1" height="1" fill="#222"/><rect x="0" y="20" width="1" height="1" fill="#222"/><rect x="16" y="20" width="1" height="1" fill="#222"/></svg>
<div class="t" style="left:-21.50px;width:400px;text-align:center;top:110.53px;font-size:10.6px;line-height:14px;font-weight:normal;color:#111;font-family:'Liberation Sans', sans-serif;">...</div>
<div class="t" style="right:964.60px;top:135.83px;font-size:10.6px;line-height:14px;font-weight:normal;color:#111;font-family:'Liberation Sans', sans-serif;">Repeat</div>
<div class="r" style="left:68px;top:137px;width:12px;height:12px;background:#fdfdfd;border:1px solid #7a7a7a;"></div>
<div class="t" style="right:848.40px;top:135.83px;font-size:10.6px;line-height:14px;font-weight:normal;color:#111;font-family:'Liberation Sans', sans-serif;">Transpose</div>
<div class="r" style="left:180.5px;top:132px;width:62px;height:21.5px;background:#e6e6e6;border:1px solid #707070;border-radius:1px;box-shadow:inset 1px 1px 0 #fafafa;"></div>
<div class="r" style="left:226.5px;top:134px;width:1px;height:17.5px;background:#c2c2c2;"></div>
<div class="r" style="left:227.5px;top:134px;width:1px;height:17.5px;background:#f6f6f6;"></div>
<svg class="r" style="left:230px;top:140px;" width="8" height="9" viewBox="0 0 8 9"><path d="M1 1.6 L2.5 0.8 L4 1.8 L5.5 0.8 L7 1.6 L4 5.2 Z" fill="#000" stroke="#000" stroke-width="0.6" stroke-linejoin="round"/><path d="M2.2 7.5 H6" stroke="#c0c0c0" stroke-width="1.2"/></svg>
<div class="t" style="left:3.50px;width:400px;text-align:center;top:135.98px;font-size:10.6px;line-height:14px;font-weight:normal;color:#111;font-family:'Liberation Sans', sans-serif;">0</div>
<div class="t" style="right:965.60px;top:159.83px;font-size:10.6px;line-height:14px;font-weight:normal;color:#111;font-family:'Liberation Sans', sans-serif;">Quantize</div>
<div class="r" style="left:63.5px;top:155.5px;width:60.5px;height:21.5px;background:#e6e6e6;border:1px solid #707070;border-radius:1px;box-shadow:inset 1px 1px 0 #fafafa;"></div>
<div class="r" style="left:108px;top:157.5px;width:1px;height:17.5px;background:#c2c2c2;"></div>
<div class="r" style="left:109px;top:157.5px;width:1px;height:17.5px;background:#f6f6f6;"></div>
<svg class="r" style="left:112px;top:163px;" width="8" height="9" viewBox="0 0 8 9"><path d="M1 1.6 L2.5 0.8 L4 1.8 L5.5 0.8 L7 1.6 L4 5.2 Z" fill="#000" stroke="#000" stroke-width="0.6" stroke-linejoin="round"/><path d="M2.2 7.5 H6" stroke="#c0c0c0" stroke-width="1.2"/></svg>
<div class="t" style="left:-111.25px;width:400px;text-align:center;top:159.48px;font-size:10.6px;line-height:14px;font-weight:normal;color:#111;font-family:'Liberation Sans', sans-serif;">Off</div>
<div class="t" style="right:847.60px;top:159.83px;font-size:10.6px;line-height:14px;font-weight:normal;color:#111;font-family:'Liberation Sans', sans-serif;">Delay</div>
<div class="r" style="left:180.5px;top:155.5px;width:62px;height:21.5px;background:#e6e6e6;border:1px solid #707070;border-radius:1px;box-shadow:inset 1px 1px 0 #fafafa;"></div>
<div class="r" style="left:226.5px;top:157.5px;width:1px;height:17.5px;background:#c2c2c2;"></div>
<div class="r" style="left:227.5px;top:157.5px;width:1px;height:17.5px;background:#f6f6f6;"></div>
<svg class="r" style="left:230px;top:163px;" width="8" height="9" viewBox="0 0 8 9"><path d="M1 1.6 L2.5 0.8 L4 1.8 L5.5 0.8 L7 1.6 L4 5.2 Z" fill="#000" stroke="#000" stroke-width="0.6" stroke-linejoin="round"/><path d="M2.2 7.5 H6" stroke="#c0c0c0" stroke-width="1.2"/></svg>
<div class="t" style="left:3.50px;width:400px;text-align:center;top:159.48px;font-size:10.6px;line-height:14px;font-weight:normal;color:#111;font-family:'Liberation Sans', sans-serif;">0</div>
<div class="t" style="right:965.10px;top:183.33px;font-size:10.6px;line-height:14px;font-weight:normal;color:#111;font-family:'Liberation Sans', sans-serif;">Color</div>
<div class="r" style="left:63.5px;top:179px;width:179px;height:21.5px;background:#e6e6e6;border:1px solid #707070;border-radius:1px;box-shadow:inset 1px 1px 0 #fafafa;"></div>
<div class="r" style="left:226.5px;top:181px;width:1px;height:17.5px;background:#c2c2c2;"></div>
<div class="r" style="left:227.5px;top:181px;width:1px;height:17.5px;background:#f6f6f6;"></div>
<svg class="r" style="left:230px;top:187px;" width="8" height="9" viewBox="0 0 8 9"><path d="M1 1.6 L2.5 0.8 L4 1.8 L5.5 0.8 L7 1.6 L4 5.2 Z" fill="#000" stroke="#000" stroke-width="0.6" stroke-linejoin="round"/><path d="M2.2 7.5 H6" stroke="#c0c0c0" stroke-width="1.2"/></svg>
<div class="t" style="left:83.20px;top:182.98px;font-size:10.6px;line-height:14px;font-weight:normal;color:#111;font-family:'Liberation Sans', sans-serif;">Default Color</div>
<div class="r" style="left:68.5px;top:182.5px;width:13.5px;height:13.5px;background:#c4d282;"></div>
<div class="t" style="left:-76.80px;width:400px;text-align:center;top:234.63px;font-size:10.6px;line-height:14px;font-weight:normal;color:#111;font-family:'Liberation Sans', sans-serif;">General MIDI Device #1</div>
<div class="t" style="left:-76.50px;width:400px;text-align:center;top:251.13px;font-size:10.6px;line-height:14px;font-weight:normal;color:#111;font-family:'Liberation Sans', sans-serif;">[ 65:0 Emu10k1 Port 0 ]</div>
<div class="t" style="left:21.00px;top:271.93px;font-size:10.6px;line-height:14px;font-weight:normal;color:#111;font-family:'Liberation Sans', sans-serif;">Channel</div>
<div class="r" style="left:189.5px;top:267px;width:40px;height:23.5px;background:#e6e6e6;border:1px solid #707070;border-radius:1px;box-shadow:inset 1px 1px 0 #fafafa;"></div>
<div class="r" style="left:213.3px;top:269px;width:1px;height:19.5px;background:#c2c2c2;"></div>
<div class="r" style="left:214.3px;top:269px;width:1px;height:19.5px;background:#f6f6f6;"></div>
<svg class="r" style="left:217px;top:276px;" width="8" height="9" viewBox="0 0 8 9"><path d="M1 1.6 L2.5 0.8 L4 1.8 L5.5 0.8 L7 1.6 L4 5.2 Z" fill="#000" stroke="#000" stroke-width="0.6" stroke-linejoin="round"/><path d="M2.2 7.5 H6" stroke="#c0c0c0" stroke-width="1.2"/></svg>
<div class="t" style="left:195.50px;top:271.98px;font-size:10.6px;line-height:14px;font-weight:normal;color:#111;font-family:'Liberation Sans', sans-serif;">1</div>
<div class="t" style="left:21.00px;top:291.03px;font-size:10.6px;line-height:14px;font-weight:normal;color:#111;font-family:'Liberation Sans', sans-serif;">Percussion</div>
<div class="r" style="left:218px;top:292px;width:11.5px;height:11.5px;background:#fdfdfd;border:1px solid #7a7a7a;"></div>
<div class="t" style="left:21.00px;top:310.03px;font-size:10.6px;line-height:14px;font-weight:normal;color:#111;font-family:'Liberation Sans', sans-serif;">Bank</div>
<div class="r" style="left:77px;top:311px;width:11.5px;height:11.5px;background:#fdfdfd;border:1px solid #7a7a7a;"></div>
<svg class="r" style="left:78px;top:312px;" width="10" height="10" viewBox="0 0 10 10"><path d="M2.5 5.2 L4.3 7.6 L7.8 2" stroke="#3040a8" stroke-width="1.2" fill="none"/></svg>
<div class="r" style="left:89.5px;top:304.5px;width:140px;height:24px;background:#e6e6e6;border:1px solid #707070;border-radius:1px;box-shadow:inset 1px 1px 0 #fafafa;"></div>
<div class="r" style="left:213.3px;top:306.5px;width:1px;height:20px;background:#c2c2c2;"></div>
<div class="r" style="left:214.3px;top:306.5px;width:1px;height:20px;background:#f6f6f6;"></div>
<svg class="r" style="left:217px;top:314px;" width="8" height="9" viewBox="0 0 8 9"><path d="M1 1.6 L2.5 0.8 L4 1.8 L5.5 0.8 L7 1.6 L4 5.2 Z" fill="#000" stroke="#000" stroke-width="0.6" stroke-linejoin="round"/><path d="M2.2 7.5 H6" stroke="#c0c0c0" stroke-width="1.2"/></svg>
<div class="t" style="left:94.70px;top:309.73px;font-size:10.6px;line-height:14px;font-weight:normal;color:#111;font-family:'Liberation Sans', sans-serif;">General MIDI</div>
<div class="t" style="left:21.00px;top:334.83px;font-size:10.6px;line-height:14px;font-weight:normal;color:#111;font-family:'Liberation Sans', sans-serif;">Program</div>
<div class="r" style="left:77px;top:336px;width:11.5px;height:11.5px;background:#fdfdfd;border:1px solid #7a7a7a;"></div>
<svg class="r" style="left:78px;top:337px;" width="10" height="10" viewBox="0 0 10 10"><path d="M2.5 5.2 L4.3 7.6 L7.8 2" stroke="#3040a8" stroke-width="1.2" fill="none"/></svg>
<div class="r" style="left:89.5px;top:330px;width:140px;height:23px;background:#e6e6e6;border:1px solid #707070;border-radius:1px;box-shadow:inset 1px 1px 0 #fafafa;"></div>
<div class="r" style="left:213.3px;top:332px;width:1px;height:19px;background:#c2c2c2;"></div>
<div class="r" style="left:214.3px;top:332px;width:1px;height:19px;background:#f6f6f6;"></div>
<svg class="r" style="left:217px;top:338px;" width="8" height="9" viewBox="0 0 8 9"><path d="M1 1.6 L2.5 0.8 L4 1.8 L5.5 0.8 L7 1.6 L4 5.2 Z" fill="#000" stroke="#000" stroke-width="0.6" stroke-linejoin="round"/><path d="M2.2 7.5 H6" stroke="#c0c0c0" stroke-width="1.2"/></svg>
<div class="t" style="left:95.20px;top:334.73px;font-size:10.6px;line-height:14px;font-weight:normal;color:#111;font-family:'Liberation Sans', sans-serif;">1. Acoustic Grand Piano</div>
<svg class="r" style="left:47px;top:374px;" width="20" height="20" viewBox="0 0 20 20"><circle cx="10" cy="10" r="7.6" fill="#e8e8e8" stroke="#c2c2c2" stroke-width="1.1"/><path d="M15.4 4.6 A7.6 7.6 0 0 1 4.6 15.4" stroke="#f8f8f8" stroke-width="1.1" fill="none"/><circle cx="10.3" cy="10.4" r="6.2" fill="#f6b8bc"/><line x1="10.20" y1="9.40" x2="10.20" y2="4.40" stroke="#6e6e6e" stroke-width="1.5"/></svg>
<svg class="r" style="left:48px;top:393px;" width="20" height="20" viewBox="0 0 20 20"><circle cx="10" cy="10" r="7.6" fill="#e8e8e8" stroke="#c2c2c2" stroke-width="1.1"/><path d="M15.4 4.6 A7.6 7.6 0 0 1 4.6 15.4" stroke="#f8f8f8" stroke-width="1.1" fill="none"/><circle cx="10.3" cy="10.4" r="6.2" fill="#d4dcfc"/><path d="M3.3 14.2 A7.4 7.4 0 1 1 17.3 9.2" stroke="#e07428" stroke-width="2" fill="none"/><line x1="10.98" y1="10.03" x2="15.87" y2="8.99" stroke="#6e6e6e" stroke-width="1.5"/></svg>
<svg class="r" style="left:47px;top:412px;" width="20" height="20" viewBox="0 0 20 20"><circle cx="10" cy="10" r="7.6" fill="#e8e8e8" stroke="#c2c2c2" stroke-width="1.1"/><path d="M15.4 4.6 A7.6 7.6 0 0 1 4.6 15.4" stroke="#f8f8f8" stroke-width="1.1" fill="none"/><circle cx="10.3" cy="10.4" r="6.2" fill="#fde9d2"/><line x1="9.63" y1="10.77" x2="6.10" y2="14.30" stroke="#6e6e6e" stroke-width="1.5"/></svg>
<svg class="r" style="left:120px;top:374px;" width="20" height="20" viewBox="0 0 20 20"><circle cx="10" cy="10" r="7.6" fill="#e8e8e8" stroke="#c2c2c2" stroke-width="1.1"/><path d="M15.4 4.6 A7.6 7.6 0 0 1 4.6 15.4" stroke="#f8f8f8" stroke-width="1.1" fill="none"/><circle cx="10.3" cy="10.4" r="6.2" fill="#e6f8de"/><line x1="9.63" y1="10.77" x2="6.10" y2="14.30" stroke="#6e6e6e" stroke-width="1.5"/></svg>
<svg class="r" style="left:120px;top:393px;" width="20" height="20" viewBox="0 0 20 20"><circle cx="10" cy="10" r="7.6" fill="#e8e8e8" stroke="#c2c2c2" stroke-width="1.1"/><path d="M15.4 4.6 A7.6 7.6 0 0 1 4.6 15.4" stroke="#f8f8f8" stroke-width="1.1" fill="none"/><circle cx="10.3" cy="10.4" r="6.2" fill="#e6f8de"/><line x1="9.63" y1="10.77" x2="6.10" y2="14.30" stroke="#6e6e6e" stroke-width="1.5"/></svg>
<svg class="r" style="left:120px;top:412px;" width="20" height="20" viewBox="0 0 20 20"><circle cx="10" cy="10" r="7.6" fill="#e8e8e8" stroke="#c2c2c2" stroke-width="1.1"/><path d="M15.4 4.6 A7.6 7.6 0 0 1 4.6 15.4" stroke="#f8f8f8" stroke-width="1.1" fill="none"/><circle cx="10.3" cy="10.4" r="6.2" fill="#f6b8bc"/><path d="M3.3 14.2 A7.4 7.4 0 1 1 17.3 9.2" stroke="#e07428" stroke-width="2" fill="none"/><line x1="10.98" y1="10.03" x2="15.87" y2="8.99" stroke="#6e6e6e" stroke-width="1.5"/></svg>
<div class="t" style="left:73.60px;top:377.93px;font-size:10.6px;line-height:14px;font-weight:normal;color:#111;font-family:'Liberation Sans', sans-serif;">Pan</div>
<div class="t" style="left:73.60px;top:396.23px;font-size:10.6px;line-height:14px;font-weight:normal;color:#111;font-family:'Liberation Sans', sans-serif;">Volume</div>
<div class="t" style="left:73.60px;top:414.73px;font-size:10.6px;line-height:14px;font-weight:normal;color:#111;font-family:'Liberation Sans', sans-serif;">Sustain</div>
<div class="t" style="left:146.00px;top:377.93px;font-size:10.6px;line-height:14px;font-weight:normal;color:#111;font-family:'Liberation Sans', sans-serif;">Chorus</div>
<div class="t" style="left:146.00px;top:396.23px;font-size:10.6px;line-height:14px;font-weight:normal;color:#111;font-family:'Liberation Sans', sans-serif;">Reverb</div>
<div class="t" style="left:146.00px;top:414.73px;font-size:10.6px;line-height:14px;font-weight:normal;color:#111;font-family:'Liberation Sans', sans-serif;">Expression</div>
<div class="r" style="left:254px;top:76px;width:200px;height:39px;background:#e4e4e4;"></div>
<div class="r" style="left:253px;top:114px;width:200px;height:1px;background:#646464;"></div>
<div class="r" style="left:255px;top:115px;width:198px;height:1px;background:#f6f6f6;"></div>
<div class="r" style="left:255px;top:115px;width:1px;height:471px;background:#f6f6f6;"></div>
<div class="r" style="left:253px;top:587px;width:200px;height:1px;background:#6a6a6a;"></div>
<svg width="0" height="0" style="position:absolute"><defs><linearGradient id="lring" x1="0.15" y1="0.1" x2="0.85" y2="0.9"><stop offset="0" stop-color="#3c4048"/><stop offset="0.55" stop-color="#8a8a8a"/><stop offset="1" stop-color="#f4f4f4"/></linearGradient><radialGradient id="gb" cx="0.5" cy="0.5" r="0.55"><stop offset="0" stop-color="#f6fbff"/><stop offset="0.35" stop-color="#c4e2fc"/><stop offset="0.8" stop-color="#8cc0f0"/><stop offset="1" stop-color="#6a9ed4"/></radialGradient><radialGradient id="gr" cx="0.5" cy="0.45" r="0.55"><stop offset="0" stop-color="#ffd0d0"/><stop offset="0.4" stop-color="#f05050"/><stop offset="1" stop-color="#b01818"/></radialGradient><radialGradient id="gd" cx="0.5" cy="0.45" r="0.55"><stop offset="0" stop-color="#a80808"/><stop offset="0.7" stop-color="#8a0000"/><stop offset="1" stop-color="#5a0000"/></radialGradient></defs></svg>
<div class="r" style="left:256px;top:135px;width:196px;height:1px;background:#9c9c9c;"></div>
<div class="r" style="left:256px;top:136px;width:196px;height:1px;background:#fafafa;"></div>
<div class="r" style="left:257.5px;top:122.3px;width:7.5px;height:6.5px;background:#c8b400;"></div>
<div class="r" style="left:265px;top:122.3px;width:5px;height:6.5px;background:#000;"></div>
<div class="r" style="left:271.5px;top:122.3px;width:3.5px;height:6.5px;background:#000;"></div>
<svg class="r" style="left:275px;top:117px;" width="14" height="14" viewBox="0 0 14 14"><circle cx="7" cy="7" r="5.9" fill="url(#lring)"/><circle cx="7" cy="7" r="4.7" fill="url(#gb)"/></svg>
<svg class="r" style="left:289px;top:117px;" width="14" height="14" viewBox="0 0 14 14"><circle cx="7" cy="7" r="5.9" fill="url(#lring)"/><circle cx="7" cy="7" r="4.7" fill="url(#gr)"/></svg>
<div class="r" style="left:304px;top:118px;width:148.5px;height:14px;background:#4a56a8;"></div>
<div class="t" style="left:310.30px;top:118.08px;font-size:11.3px;line-height:15px;font-weight:normal;color:#fff;font-family:'Liberation Sans', sans-serif;">Distortion Guitar</div>
<div class="r" style="left:256px;top:156px;width:196px;height:1px;background:#9c9c9c;"></div>
<div class="r" style="left:256px;top:157px;width:196px;height:1px;background:#fafafa;"></div>
<div class="r" style="left:257.5px;top:143px;width:11.5px;height:7px;background:#ff9a00;"></div>
<div class="r" style="left:269.0px;top:143px;width:6.0px;height:7px;background:#000;"></div>
<svg class="r" style="left:275px;top:138px;" width="14" height="14" viewBox="0 0 14 14"><circle cx="7" cy="7" r="5.9" fill="url(#lring)"/><circle cx="7" cy="7" r="4.7" fill="url(#gb)"/></svg>
<svg class="r" style="left:289px;top:138px;" width="14" height="14" viewBox="0 0 14 14"><circle cx="7" cy="7" r="5.9" fill="url(#lring)"/><circle cx="7" cy="7" r="4.7" fill="url(#gd)"/></svg>
<div class="t" style="left:310.30px;top:138.95px;font-size:11.3px;line-height:15px;font-weight:normal;color:#111;font-family:'Liberation Sans', sans-serif;">Pick Bass</div>
<div class="r" style="left:256px;top:177px;width:196px;height:1px;background:#9c9c9c;"></div>
<div class="r" style="left:256px;top:178px;width:196px;height:1px;background:#fafafa;"></div>
<div class="r" style="left:257.5px;top:164px;width:12.5px;height:7px;background:#ff9a00;"></div>
<div class="r" style="left:270.0px;top:164px;width:5.0px;height:7px;background:#000;"></div>
<svg class="r" style="left:275px;top:159px;" width="14" height="14" viewBox="0 0 14 14"><circle cx="7" cy="7" r="5.9" fill="url(#lring)"/><circle cx="7" cy="7" r="4.7" fill="url(#gb)"/></svg>
<svg class="r" style="left:289px;top:159px;" width="14" height="14" viewBox="0 0 14 14"><circle cx="7" cy="7" r="5.9" fill="url(#lring)"/><circle cx="7" cy="7" r="4.7" fill="url(#gd)"/></svg>
<div class="t" style="left:310.30px;top:159.82px;font-size:11.3px;line-height:15px;font-weight:normal;color:#111;font-family:'Liberation Sans', sans-serif;">Percussion</div>
<div class="r" style="left:256px;top:197px;width:196px;height:1px;background:#9c9c9c;"></div>
<div class="r" style="left:256px;top:198px;width:196px;height:1px;background:#fafafa;"></div>
<div class="t" style="left:262.50px;top:180.69px;font-size:11.3px;line-height:15px;font-weight:normal;color:#111;font-family:'Liberation Sans', sans-serif;">4</div>
<svg class="r" style="left:275px;top:180px;" width="14" height="14" viewBox="0 0 14 14"><circle cx="7" cy="7" r="5.9" fill="url(#lring)"/><circle cx="7" cy="7" r="4.7" fill="url(#gb)"/></svg>
<svg class="r" style="left:289px;top:180px;" width="14" height="14" viewBox="0 0 14 14"><circle cx="7" cy="7" r="5.9" fill="url(#lring)"/><circle cx="7" cy="7" r="4.7" fill="url(#gd)"/></svg>
<div class="t" style="left:310.30px;top:180.69px;font-size:11.3px;line-height:15px;font-weight:normal;color:#111;font-family:'Liberation Sans', sans-serif;">&lt;untitled&gt;</div>
<div class="r" style="left:256px;top:218px;width:196px;height:1px;background:#9c9c9c;"></div>
<div class="r" style="left:256px;top:219px;width:196px;height:1px;background:#fafafa;"></div>
<div class="t" style="left:262.50px;top:201.56px;font-size:11.3px;line-height:15px;font-weight:normal;color:#111;font-family:'Liberation Sans', sans-serif;">5</div>
<svg class="r" style="left:275px;top:200px;" width="14" height="14" viewBox="0 0 14 14"><circle cx="7" cy="7" r="5.9" fill="url(#lring)"/><circle cx="7" cy="7" r="4.7" fill="url(#gb)"/></svg>
<svg class="r" style="left:289px;top:200px;" width="14" height="14" viewBox="0 0 14 14"><circle cx="7" cy="7" r="5.9" fill="url(#lring)"/><circle cx="7" cy="7" r="4.7" fill="url(#gd)"/></svg>
<div class="t" style="left:310.30px;top:201.56px;font-size:11.3px;line-height:15px;font-weight:normal;color:#111;font-family:'Liberation Sans', sans-serif;">&lt;untitled&gt;</div>
<div class="r" style="left:256px;top:239px;width:196px;height:1px;background:#9c9c9c;"></div>
<div class="r" style="left:256px;top:240px;width:196px;height:1px;background:#fafafa;"></div>
<div class="t" style="left:262.50px;top:222.43px;font-size:11.3px;line-height:15px;font-weight:normal;color:#111;font-family:'Liberation Sans', sans-serif;">6</div>
<svg class="r" style="left:275px;top:221px;" width="14" height="14" viewBox="0 0 14 14"><circle cx="7" cy="7" r="5.9" fill="url(#lring)"/><circle cx="7" cy="7" r="4.7" fill="url(#gb)"/></svg>
<svg class="r" style="left:289px;top:221px;" width="14" height="14" viewBox="0 0 14 14"><circle cx="7" cy="7" r="5.9" fill="url(#lring)"/><circle cx="7" cy="7" r="4.7" fill="url(#gd)"/></svg>
<div class="t" style="left:310.30px;top:222.43px;font-size:11.3px;line-height:15px;font-weight:normal;color:#111;font-family:'Liberation Sans', sans-serif;">&lt;untitled&gt;</div>
<div class="r" style="left:256px;top:260px;width:196px;height:1px;background:#9c9c9c;"></div>
<div class="r" style="left:256px;top:261px;width:196px;height:1px;background:#fafafa;"></div>
<div class="t" style="left:262.50px;top:243.30px;font-size:11.3px;line-height:15px;font-weight:normal;color:#111;font-family:'Liberation Sans', sans-serif;">7</div>
<svg class="r" style="left:275px;top:242px;" width="14" height="14" viewBox="0 0 14 14"><circle cx="7" cy="7" r="5.9" fill="url(#lring)"/><circle cx="7" cy="7" r="4.7" fill="url(#gb)"/></svg>
<svg class="r" style="left:289px;top:242px;" width="14" height="14" viewBox="0 0 14 14"><circle cx="7" cy="7" r="5.9" fill="url(#lring)"/><circle cx="7" cy="7" r="4.7" fill="url(#gd)"/></svg>
<div class="t" style="left:310.30px;top:243.30px;font-size:11.3px;line-height:15px;font-weight:normal;color:#111;font-family:'Liberation Sans', sans-serif;">&lt;untitled&gt;</div>
<div class="r" style="left:256px;top:281px;width:196px;height:1px;background:#9c9c9c;"></div>
<div class="r" style="left:256px;top:282px;width:196px;height:1px;background:#fafafa;"></div>
<div class="t" style="left:262.50px;top:264.17px;font-size:11.3px;line-height:15px;font-weight:normal;color:#111;font-family:'Liberation Sans', sans-serif;">8</div>
<svg class="r" style="left:275px;top:263px;" width="14" height="14" viewBox="0 0 14 14"><circle cx="7" cy="7" r="5.9" fill="url(#lring)"/><circle cx="7" cy="7" r="4.7" fill="url(#gb)"/></svg>
<svg class="r" style="left:289px;top:263px;" width="14" height="14" viewBox="0 0 14 14"><circle cx="7" cy="7" r="5.9" fill="url(#lring)"/><circle cx="7" cy="7" r="4.7" fill="url(#gd)"/></svg>
<div class="t" style="left:310.30px;top:264.17px;font-size:11.3px;line-height:15px;font-weight:normal;color:#111;font-family:'Liberation Sans', sans-serif;">&lt;untitled&gt;</div>
<div class="r" style="left:256px;top:302px;width:196px;height:1px;background:#9c9c9c;"></div>
<div class="r" style="left:256px;top:303px;width:196px;height:1px;background:#fafafa;"></div>
<div class="t" style="left:262.50px;top:285.04px;font-size:11.3px;line-height:15px;font-weight:normal;color:#111;font-family:'Liberation Sans', sans-serif;">9</div>
<svg class="r" style="left:275px;top:284px;" width="14" height="14" viewBox="0 0 14 14"><circle cx="7" cy="7" r="5.9" fill="url(#lring)"/><circle cx="7" cy="7" r="4.7" fill="url(#gb)"/></svg>
<svg class="r" style="left:289px;top:284px;" width="14" height="14" viewBox="0 0 14 14"><circle cx="7" cy="7" r="5.9" fill="url(#lring)"/><circle cx="7" cy="7" r="4.7" fill="url(#gd)"/></svg>
<div class="t" style="left:310.30px;top:285.04px;font-size:11.3px;line-height:15px;font-weight:normal;color:#111;font-family:'Liberation Sans', sans-serif;">&lt;untitled&gt;</div>
<div class="r" style="left:256px;top:323px;width:196px;height:1px;background:#9c9c9c;"></div>
<div class="r" style="left:256px;top:324px;width:196px;height:1px;background:#fafafa;"></div>
<div class="t" style="left:259.50px;top:305.91px;font-size:11.3px;line-height:15px;font-weight:normal;color:#111;font-family:'Liberation Sans', sans-serif;">10</div>
<svg class="r" style="left:275px;top:305px;" width="14" height="14" viewBox="0 0 14 14"><circle cx="7" cy="7" r="5.9" fill="url(#lring)"/><circle cx="7" cy="7" r="4.7" fill="url(#gb)"/></svg>
<svg class="r" style="left:289px;top:305px;" width="14" height="14" viewBox="0 0 14 14"><circle cx="7" cy="7" r="5.9" fill="url(#lring)"/><circle cx="7" cy="7" r="4.7" fill="url(#gd)"/></svg>
<div class="t" style="left:310.30px;top:305.91px;font-size:11.3px;line-height:15px;font-weight:normal;color:#111;font-family:'Liberation Sans', sans-serif;">&lt;untitled&gt;</div>
<div class="r" style="left:256px;top:344px;width:196px;height:1px;background:#9c9c9c;"></div>
<div class="r" style="left:256px;top:345px;width:196px;height:1px;background:#fafafa;"></div>
<div class="t" style="left:259.50px;top:326.78px;font-size:11.3px;line-height:15px;font-weight:normal;color:#111;font-family:'Liberation Sans', sans-serif;">11</div>
<svg class="r" style="left:275px;top:326px;" width="14" height="14" viewBox="0 0 14 14"><circle cx="7" cy="7" r="5.9" fill="url(#lring)"/><circle cx="7" cy="7" r="4.7" fill="url(#gb)"/></svg>
<svg class="r" style="left:289px;top:326px;" width="14" height="14" viewBox="0 0 14 14"><circle cx="7" cy="7" r="5.9" fill="url(#lring)"/><circle cx="7" cy="7" r="4.7" fill="url(#gd)"/></svg>
<div class="t" style="left:310.30px;top:326.78px;font-size:11.3px;line-height:15px;font-weight:normal;color:#111;font-family:'Liberation Sans', sans-serif;">&lt;untitled&gt;</div>
<div class="r" style="left:256px;top:364px;width:196px;height:1px;background:#9c9c9c;"></div>
<div class="r" style="left:256px;top:365px;width:196px;height:1px;background:#fafafa;"></div>
<div class="t" style="left:259.50px;top:347.65px;font-size:11.3px;line-height:15px;font-weight:normal;color:#111;font-family:'Liberation Sans', sans-serif;">12</div>
<svg class="r" style="left:275px;top:347px;" width="14" height="14" viewBox="0 0 14 14"><circle cx="7" cy="7" r="5.9" fill="url(#lring)"/><circle cx="7" cy="7" r="4.7" fill="url(#gb)"/></svg>
<svg class="r" style="left:289px;top:347px;" width="14" height="14" viewBox="0 0 14 14"><circle cx="7" cy="7" r="5.9" fill="url(#lring)"/><circle cx="7" cy="7" r="4.7" fill="url(#gd)"/></svg>
<div class="t" style="left:310.30px;top:347.65px;font-size:11.3px;line-height:15px;font-weight:normal;color:#111;font-family:'Liberation Sans', sans-serif;">&lt;untitled&gt;</div>
<div class="r" style="left:256px;top:385px;width:196px;height:1px;background:#9c9c9c;"></div>
<div class="r" style="left:256px;top:386px;width:196px;height:1px;background:#fafafa;"></div>
<div class="t" style="left:259.50px;top:368.52px;font-size:11.3px;line-height:15px;font-weight:normal;color:#111;font-family:'Liberation Sans', sans-serif;">13</div>
<svg class="r" style="left:275px;top:367px;" width="14" height="14" viewBox="0 0 14 14"><circle cx="7" cy="7" r="5.9" fill="url(#lring)"/><circle cx="7" cy="7" r="4.7" fill="url(#gb)"/></svg>
<svg class="r" style="left:289px;top:367px;" width="14" height="14" viewBox="0 0 14 14"><circle cx="7" cy="7" r="5.9" fill="url(#lring)"/><circle cx="7" cy="7" r="4.7" fill="url(#gd)"/></svg>
<div class="t" style="left:310.30px;top:368.52px;font-size:11.3px;line-height:15px;font-weight:normal;color:#111;font-family:'Liberation Sans', sans-serif;">&lt;untitled&gt;</div>
<div class="r" style="left:256px;top:406px;width:196px;height:1px;background:#9c9c9c;"></div>
<div class="r" style="left:256px;top:407px;width:196px;height:1px;background:#fafafa;"></div>
<div class="t" style="left:259.50px;top:389.39px;font-size:11.3px;line-height:15px;font-weight:normal;color:#111;font-family:'Liberation Sans', sans-serif;">14</div>
<svg class="r" style="left:275px;top:388px;" width="14" height="14" viewBox="0 0 14 14"><circle cx="7" cy="7" r="5.9" fill="url(#lring)"/><circle cx="7" cy="7" r="4.7" fill="url(#gb)"/></svg>
<svg class="r" style="left:289px;top:388px;" width="14" height="14" viewBox="0 0 14 14"><circle cx="7" cy="7" r="5.9" fill="url(#lring)"/><circle cx="7" cy="7" r="4.7" fill="url(#gd)"/></svg>
<div class="t" style="left:310.30px;top:389.39px;font-size:11.3px;line-height:15px;font-weight:normal;color:#111;font-family:'Liberation Sans', sans-serif;">&lt;untitled&gt;</div>
<div class="r" style="left:256px;top:427px;width:196px;height:1px;background:#9c9c9c;"></div>
<div class="r" style="left:256px;top:428px;width:196px;height:1px;background:#fafafa;"></div>
<div class="t" style="left:259.50px;top:410.26px;font-size:11.3px;line-height:15px;font-weight:normal;color:#111;font-family:'Liberation Sans', sans-serif;">15</div>
<svg class="r" style="left:275px;top:409px;" width="14" height="14" viewBox="0 0 14 14"><circle cx="7" cy="7" r="5.9" fill="url(#lring)"/><circle cx="7" cy="7" r="4.7" fill="url(#gb)"/></svg>
<svg class="r" style="left:289px;top:409px;" width="14" height="14" viewBox="0 0 14 14"><circle cx="7" cy="7" r="5.9" fill="url(#lring)"/><circle cx="7" cy="7" r="4.7" fill="url(#gd)"/></svg>
<div class="t" style="left:310.30px;top:410.26px;font-size:11.3px;line-height:15px;font-weight:normal;color:#111;font-family:'Liberation Sans', sans-serif;">&lt;untitled&gt;</div>
<div class="r" style="left:256px;top:448px;width:196px;height:1px;background:#9c9c9c;"></div>
<div class="r" style="left:256px;top:449px;width:196px;height:1px;background:#fafafa;"></div>
<div class="t" style="left:259.50px;top:431.13px;font-size:11.3px;line-height:15px;font-weight:normal;color:#111;font-family:'Liberation Sans', sans-serif;">16</div>
<svg class="r" style="left:275px;top:430px;" width="14" height="14" viewBox="0 0 14 14"><circle cx="7" cy="7" r="5.9" fill="url(#lring)"/><circle cx="7" cy="7" r="4.7" fill="url(#gb)"/></svg>
<svg class="r" style="left:289px;top:430px;" width="14" height="14" viewBox="0 0 14 14"><circle cx="7" cy="7" r="5.9" fill="url(#lring)"/><circle cx="7" cy="7" r="4.7" fill="url(#gd)"/></svg>
<div class="t" style="left:310.30px;top:431.13px;font-size:11.3px;line-height:15px;font-weight:normal;color:#111;font-family:'Liberation Sans', sans-serif;">&lt;untitled&gt;</div>
<div class="r" style="left:256px;top:469px;width:196px;height:1px;background:#9c9c9c;"></div>
<div class="r" style="left:256px;top:470px;width:196px;height:1px;background:#fafafa;"></div>
<div class="t" style="left:259.50px;top:452.00px;font-size:11.3px;line-height:15px;font-weight:normal;color:#111;font-family:'Liberation Sans', sans-serif;">17</div>
<svg class="r" style="left:275px;top:451px;" width="14" height="14" viewBox="0 0 14 14"><circle cx="7" cy="7" r="5.9" fill="url(#lring)"/><circle cx="7" cy="7" r="4.7" fill="url(#gb)"/></svg>
<svg class="r" style="left:289px;top:451px;" width="14" height="14" viewBox="0 0 14 14"><circle cx="7" cy="7" r="5.9" fill="url(#lring)"/><circle cx="7" cy="7" r="4.7" fill="url(#gd)"/></svg>
<div class="t" style="left:310.30px;top:452.00px;font-size:11.3px;line-height:15px;font-weight:normal;color:#111;font-family:'Liberation Sans', sans-serif;">buzzbells</div>
<div class="r" style="left:256px;top:490px;width:196px;height:1px;background:#9c9c9c;"></div>
<div class="r" style="left:256px;top:491px;width:196px;height:1px;background:#fafafa;"></div>
<div class="r" style="left:257px;top:476.5px;width:7px;height:7px;background:#b4b400;"></div>
<div class="r" style="left:264px;top:476.5px;width:2.5px;height:7px;background:#000;"></div>
<div class="r" style="left:268px;top:476.5px;width:6.5px;height:7px;background:#000;"></div>
<svg class="r" style="left:275px;top:472px;" width="14" height="14" viewBox="0 0 14 14"><circle cx="7" cy="7" r="5.9" fill="url(#lring)"/><circle cx="7" cy="7" r="4.7" fill="url(#gb)"/></svg>
<svg class="r" style="left:289px;top:472px;" width="14" height="14" viewBox="0 0 14 14"><circle cx="7" cy="7" r="5.9" fill="url(#lring)"/><circle cx="7" cy="7" r="4.7" fill="url(#gd)"/></svg>
<div class="t" style="left:310.30px;top:472.87px;font-size:11.3px;line-height:15px;font-weight:normal;color:#111;font-family:'Liberation Sans', sans-serif;">lightnin' H</div>
<div class="r" style="left:256px;top:511px;width:196px;height:1px;background:#9c9c9c;"></div>
<div class="r" style="left:256px;top:512px;width:196px;height:1px;background:#fafafa;"></div>
<div class="r" style="left:257px;top:497.5px;width:6.2px;height:7px;background:#a0b820;"></div>
<div class="r" style="left:263.2px;top:497.5px;width:5.6px;height:7px;background:#000;"></div>
<div class="r" style="left:270.5px;top:497.5px;width:4px;height:7px;background:#000;"></div>
<svg class="r" style="left:275px;top:493px;" width="14" height="14" viewBox="0 0 14 14"><circle cx="7" cy="7" r="5.9" fill="url(#lring)"/><circle cx="7" cy="7" r="4.7" fill="url(#gb)"/></svg>
<svg class="r" style="left:289px;top:493px;" width="14" height="14" viewBox="0 0 14 14"><circle cx="7" cy="7" r="5.9" fill="url(#lring)"/><circle cx="7" cy="7" r="4.7" fill="url(#gd)"/></svg>
<div class="t" style="left:310.30px;top:493.74px;font-size:11.3px;line-height:15px;font-weight:normal;color:#111;font-family:'Liberation Sans', sans-serif;">Bunting</div>
<div class="r" style="left:256px;top:531px;width:196px;height:1px;background:#9c9c9c;"></div>
<div class="r" style="left:256px;top:532px;width:196px;height:1px;background:#fafafa;"></div>
<div class="t" style="left:259.50px;top:514.61px;font-size:11.3px;line-height:15px;font-weight:normal;color:#111;font-family:'Liberation Sans', sans-serif;">20</div>
<svg class="r" style="left:275px;top:514px;" width="14" height="14" viewBox="0 0 14 14"><circle cx="7" cy="7" r="5.9" fill="url(#lring)"/><circle cx="7" cy="7" r="4.7" fill="url(#gb)"/></svg>
<svg class="r" style="left:289px;top:514px;" width="14" height="14" viewBox="0 0 14 14"><circle cx="7" cy="7" r="5.9" fill="url(#lring)"/><circle cx="7" cy="7" r="4.7" fill="url(#gd)"/></svg>
<div class="t" style="left:310.30px;top:514.61px;font-size:11.3px;line-height:15px;font-weight:normal;color:#111;font-family:'Liberation Sans', sans-serif;">&lt;untitled audio&gt;</div>
<div class="t" style="left:259.50px;top:535.48px;font-size:11.3px;line-height:15px;font-weight:normal;color:#111;font-family:'Liberation Sans', sans-serif;">21</div>
<svg class="r" style="left:275px;top:534px;" width="14" height="14" viewBox="0 0 14 14"><circle cx="7" cy="7" r="5.9" fill="url(#lring)"/><circle cx="7" cy="7" r="4.7" fill="url(#gb)"/></svg>
<svg class="r" style="left:289px;top:534px;" width="14" height="14" viewBox="0 0 14 14"><circle cx="7" cy="7" r="5.9" fill="url(#lring)"/><circle cx="7" cy="7" r="4.7" fill="url(#gd)"/></svg>
<div class="t" style="left:310.30px;top:535.48px;font-size:11.3px;line-height:15px;font-weight:normal;color:#111;font-family:'Liberation Sans', sans-serif;">&lt;untitled audio&gt;</div>
<div class="r" style="left:453px;top:114px;width:1px;height:473px;background:#505050;"></div>
<div class="r" style="left:452px;top:114px;width:1px;height:473px;background:#f0f0f0;"></div>
<div class="r" style="left:454px;top:76px;width:570px;height:16px;background:#86bfe7;"></div>
<div class="r" style="left:454px;top:92px;width:570px;height:1px;background:#1a2030;"></div>
<div class="r" style="left:454px;top:93px;width:570px;height:12px;background:#e6e6e6;"></div>
<div class="r" style="left:454px;top:105px;width:570px;height:9px;background:#636363;"></div>
<div class="r" style="left:454px;top:551px;width:557px;height:9px;background:#636363;"></div>
<div class="r" style="left:454px;top:559px;width:557px;height:1.2px;background:#222;"></div>
<div class="r" style="left:454px;top:560px;width:555px;height:13px;background:#e6e6e6;"></div>
<div class="r" style="left:485px;top:92px;width:1px;height:13px;background:#111;"></div>
<div class="r" style="left:486px;top:93px;width:1px;height:12px;background:#fafafa;"></div>
<div class="r" style="left:485px;top:106px;width:1px;height:8px;background:#e0e0e0;"></div>
<div class="t" style="left:489.00px;top:91.89px;font-size:10.7px;line-height:14px;font-weight:normal;color:#111;font-family:'Liberation Sans', sans-serif;">9</div>
<div class="r" style="left:485px;top:551px;width:1px;height:8px;background:#e0e0e0;"></div>
<div class="r" style="left:485px;top:560px;width:1px;height:13px;background:#111;"></div>
<div class="r" style="left:486px;top:560px;width:1px;height:13px;background:#fafafa;"></div>
<div class="t" style="left:489.00px;top:558.89px;font-size:10.7px;line-height:14px;font-weight:normal;color:#111;font-family:'Liberation Sans', sans-serif;">9</div>
<div class="r" style="left:572px;top:92px;width:1px;height:13px;background:#111;"></div>
<div class="r" style="left:573px;top:93px;width:1px;height:12px;background:#fafafa;"></div>
<div class="r" style="left:572px;top:106px;width:1px;height:8px;background:#e0e0e0;"></div>
<div class="t" style="left:576.00px;top:91.89px;font-size:10.7px;line-height:14px;font-weight:normal;color:#111;font-family:'Liberation Sans', sans-serif;">10</div>
<div class="r" style="left:572px;top:551px;width:1px;height:8px;background:#e0e0e0;"></div>
<div class="r" style="left:572px;top:560px;width:1px;height:13px;background:#111;"></div>
<div class="r" style="left:573px;top:560px;width:1px;height:13px;background:#fafafa;"></div>
<div class="t" style="left:576.00px;top:558.89px;font-size:10.7px;line-height:14px;font-weight:normal;color:#111;font-family:'Liberation Sans', sans-serif;">10</div>
<div class="r" style="left:659px;top:92px;width:1px;height:13px;background:#111;"></div>
<div class="r" style="left:660px;top:93px;width:1px;height:12px;background:#fafafa;"></div>
<div class="r" style="left:659px;top:106px;width:1px;height:8px;background:#e0e0e0;"></div>
<div class="t" style="left:663.00px;top:91.89px;font-size:10.7px;line-height:14px;font-weight:normal;color:#111;font-family:'Liberation Sans', sans-serif;">11</div>
<div class="r" style="left:659px;top:551px;width:1px;height:8px;background:#e0e0e0;"></div>
<div class="r" style="left:659px;top:560px;width:1px;height:13px;background:#111;"></div>
<div class="r" style="left:660px;top:560px;width:1px;height:13px;background:#fafafa;"></div>
<div class="t" style="left:663.00px;top:558.89px;font-size:10.7px;line-height:14px;font-weight:normal;color:#111;font-family:'Liberation Sans', sans-serif;">11</div>
<div class="r" style="left:746px;top:92px;width:1px;height:13px;background:#111;"></div>
<div class="r" style="left:747px;top:93px;width:1px;height:12px;background:#fafafa;"></div>
<div class="r" style="left:746px;top:106px;width:1px;height:8px;background:#e0e0e0;"></div>
<div class="t" style="left:750.00px;top:91.89px;font-size:10.7px;line-height:14px;font-weight:normal;color:#111;font-family:'Liberation Sans', sans-serif;">12</div>
<div class="r" style="left:746px;top:551px;width:1px;height:8px;background:#e0e0e0;"></div>
<div class="r" style="left:746px;top:560px;width:1px;height:13px;background:#111;"></div>
<div class="r" style="left:747px;top:560px;width:1px;height:13px;background:#fafafa;"></div>
<div class="t" style="left:750.00px;top:558.89px;font-size:10.7px;line-height:14px;font-weight:normal;color:#111;font-family:'Liberation Sans', sans-serif;">12</div>
<div class="r" style="left:833px;top:92px;width:1px;height:13px;background:#111;"></div>
<div class="r" style="left:834px;top:93px;width:1px;height:12px;background:#fafafa;"></div>
<div class="r" style="left:833px;top:106px;width:1px;height:8px;background:#e0e0e0;"></div>
<div class="t" style="left:837.00px;top:91.89px;font-size:10.7px;line-height:14px;font-weight:normal;color:#111;font-family:'Liberation Sans', sans-serif;">13</div>
<div class="r" style="left:833px;top:551px;width:1px;height:8px;background:#e0e0e0;"></div>
<div class="r" style="left:833px;top:560px;width:1px;height:13px;background:#111;"></div>
<div class="r" style="left:834px;top:560px;width:1px;height:13px;background:#fafafa;"></div>
<div class="t" style="left:837.00px;top:558.89px;font-size:10.7px;line-height:14px;font-weight:normal;color:#111;font-family:'Liberation Sans', sans-serif;">13</div>
<div class="r" style="left:920px;top:92px;width:1px;height:13px;background:#111;"></div>
<div class="r" style="left:921px;top:93px;width:1px;height:12px;background:#fafafa;"></div>
<div class="r" style="left:920px;top:106px;width:1px;height:8px;background:#e0e0e0;"></div>
<div class="t" style="left:924.00px;top:91.89px;font-size:10.7px;line-height:14px;font-weight:normal;color:#111;font-family:'Liberation Sans', sans-serif;">14</div>
<div class="r" style="left:920px;top:551px;width:1px;height:8px;background:#e0e0e0;"></div>
<div class="r" style="left:920px;top:560px;width:1px;height:13px;background:#111;"></div>
<div class="r" style="left:921px;top:560px;width:1px;height:13px;background:#fafafa;"></div>
<div class="t" style="left:924.00px;top:558.89px;font-size:10.7px;line-height:14px;font-weight:normal;color:#111;font-family:'Liberation Sans', sans-serif;">14</div>
<div class="r" style="left:1007px;top:92px;width:1px;height:13px;background:#111;"></div>
<div class="r" style="left:1008px;top:93px;width:1px;height:12px;background:#fafafa;"></div>
<div class="r" style="left:1007px;top:106px;width:1px;height:8px;background:#e0e0e0;"></div>
<div class="t" style="left:1011.00px;top:91.89px;font-size:10.7px;line-height:14px;font-weight:normal;color:#111;font-family:'Liberation Sans', sans-serif;">15</div>
<div class="r" style="left:1007px;top:551px;width:1px;height:8px;background:#e0e0e0;"></div>
<div class="r" style="left:1007px;top:560px;width:1px;height:13px;background:#111;"></div>
<div class="r" style="left:1008px;top:560px;width:1px;height:13px;background:#fafafa;"></div>
<div class="r" style="left:464px;top:111px;width:1px;height:3px;background:#d8d8d8;"></div>
<div class="r" style="left:464px;top:551px;width:1px;height:3px;background:#d8d8d8;"></div>
<div class="r" style="left:507px;top:111px;width:1px;height:3px;background:#d8d8d8;"></div>
<div class="r" style="left:507px;top:551px;width:1px;height:3px;background:#d8d8d8;"></div>
<div class="r" style="left:529px;top:111px;width:1px;height:3px;background:#d8d8d8;"></div>
<div class="r" style="left:529px;top:551px;width:1px;height:3px;background:#d8d8d8;"></div>
<div class="r" style="left:550px;top:111px;width:1px;height:3px;background:#d8d8d8;"></div>
<div class="r" style="left:550px;top:551px;width:1px;height:3px;background:#d8d8d8;"></div>
<div class="r" style="left:594px;top:111px;width:1px;height:3px;background:#d8d8d8;"></div>
<div class="r" style="left:594px;top:551px;width:1px;height:3px;background:#d8d8d8;"></div>
<div class="r" style="left:616px;top:111px;width:1px;height:3px;background:#d8d8d8;"></div>
<div class="r" style="left:616px;top:551px;width:1px;height:3px;background:#d8d8d8;"></div>
<div class="r" style="left:637px;top:111px;width:1px;height:3px;background:#d8d8d8;"></div>
<div class="r" style="left:637px;top:551px;width:1px;height:3px;background:#d8d8d8;"></div>
<div class="r" style="left:681px;top:111px;width:1px;height:3px;background:#d8d8d8;"></div>
<div class="r" style="left:681px;top:551px;width:1px;height:3px;background:#d8d8d8;"></div>
<div class="r" style="left:703px;top:111px;width:1px;height:3px;background:#d8d8d8;"></div>
<div class="r" style="left:703px;top:551px;width:1px;height:3px;background:#d8d8d8;"></div>
<div class="r" style="left:724px;top:111px;width:1px;height:3px;background:#d8d8d8;"></div>
<div class="r" style="left:724px;top:551px;width:1px;height:3px;background:#d8d8d8;"></div>
<div class="r" style="left:768px;top:111px;width:1px;height:3px;background:#d8d8d8;"></div>
<div class="r" style="left:768px;top:551px;width:1px;height:3px;background:#d8d8d8;"></div>
<div class="r" style="left:789px;top:111px;width:1px;height:3px;background:#d8d8d8;"></div>
<div class="r" style="left:789px;top:551px;width:1px;height:3px;background:#d8d8d8;"></div>
<div class="r" style="left:811px;top:111px;width:1px;height:3px;background:#d8d8d8;"></div>
<div class="r" style="left:811px;top:551px;width:1px;height:3px;background:#d8d8d8;"></div>
<div class="r" style="left:855px;top:111px;width:1px;height:3px;background:#d8d8d8;"></div>
<div class="r" style="left:855px;top:551px;width:1px;height:3px;background:#d8d8d8;"></div>
<div class="r" style="left:876px;top:111px;width:1px;height:3px;background:#d8d8d8;"></div>
<div class="r" style="left:876px;top:551px;width:1px;height:3px;background:#d8d8d8;"></div>
<div class="r" style="left:898px;top:111px;width:1px;height:3px;background:#d8d8d8;"></div>
<div class="r" style="left:898px;top:551px;width:1px;height:3px;background:#d8d8d8;"></div>
<div class="r" style="left:942px;top:111px;width:1px;height:3px;background:#d8d8d8;"></div>
<div class="r" style="left:942px;top:551px;width:1px;height:3px;background:#d8d8d8;"></div>
<div class="r" style="left:963px;top:111px;width:1px;height:3px;background:#d8d8d8;"></div>
<div class="r" style="left:963px;top:551px;width:1px;height:3px;background:#d8d8d8;"></div>
<div class="r" style="left:985px;top:111px;width:1px;height:3px;background:#d8d8d8;"></div>
<div class="r" style="left:985px;top:551px;width:1px;height:3px;background:#d8d8d8;"></div>
<div class="r" style="left:454px;top:114px;width:570px;height:2px;background:#8a8a8a;"></div>
<div class="r" style="left:454.5px;top:116px;width:554.5px;height:62px;background:#c5d386;"></div>
<div class="r" style="left:454.5px;top:116px;width:554.5px;height:1px;background:#3a4818;"></div>
<div class="r" style="left:454.5px;top:117px;width:554.5px;height:1px;background:#dce8a4;"></div>
<div class="r" style="left:454.5px;top:136px;width:554.5px;height:1px;background:#101010;"></div>
<div class="r" style="left:454.5px;top:137px;width:554.5px;height:1px;background:#dce8a4;"></div>
<div class="r" style="left:454.5px;top:157px;width:554.5px;height:1px;background:#101010;"></div>
<div class="r" style="left:454.5px;top:158px;width:554.5px;height:1px;background:#dce8a4;"></div>
<div class="r" style="left:454.5px;top:177px;width:554.5px;height:1px;background:#101010;"></div>
<svg class="r" style="left:454px;top:115px;" width="555" height="21" viewBox="0 0 555 21"><rect x="1" y="11" width="7" height="2" fill="#fbfbe8"/><rect x="8" y="10" width="16" height="2" fill="#fbfbe8"/><rect x="24" y="10" width="3" height="2" fill="#fbfbe8"/><rect x="27" y="11" width="15" height="2" fill="#fbfbe8"/><rect x="43" y="11" width="9" height="2" fill="#fbfbe8"/><rect x="52" y="10" width="3" height="2" fill="#fbfbe8"/><rect x="55" y="12" width="9" height="2" fill="#fbfbe8"/><rect x="65" y="12" width="12" height="2" fill="#fbfbe8"/><rect x="78" y="12" width="4" height="2" fill="#fbfbe8"/><rect x="82" y="16" width="16" height="2" fill="#fbfbe8"/><rect x="98" y="16" width="15" height="2" fill="#fbfbe8"/><rect x="113" y="15" width="6" height="2" fill="#fbfbe8"/><rect x="119" y="15" width="1" height="2" fill="#fbfbe8"/><rect x="120" y="16" width="12" height="2" fill="#fbfbe8"/><rect x="133" y="17" width="7" height="2" fill="#fbfbe8"/><rect x="140" y="16" width="1" height="2" fill="#fbfbe8"/><rect x="141" y="15" width="15" height="4" fill="#fbfbe8"/><rect x="157" y="14" width="2" height="4" fill="#fbfbe8"/><rect x="159" y="15" width="14" height="2" fill="#fbfbe8"/><rect x="174" y="16" width="6" height="2" fill="#fbfbe8"/><rect x="180" y="16" width="3" height="2" fill="#fbfbe8"/><rect x="183" y="13" width="8" height="2" fill="#fbfbe8"/><rect x="191" y="13" width="15" height="2" fill="#fbfbe8"/><rect x="206" y="14" width="10" height="2" fill="#fbfbe8"/><rect x="216" y="14" width="11" height="2" fill="#fbfbe8"/><rect x="227" y="14" width="15" height="2" fill="#fbfbe8"/><rect x="243" y="14" width="13" height="2" fill="#fbfbe8"/><rect x="257" y="14" width="13" height="2" fill="#fbfbe8"/><rect x="271" y="14" width="7" height="2" fill="#fbfbe8"/><rect x="279" y="14" width="1" height="2" fill="#fbfbe8"/><rect x="280" y="13" width="8" height="2" fill="#fbfbe8"/><rect x="288" y="14" width="4" height="2" fill="#fbfbe8"/><rect x="292" y="12" width="15" height="4" fill="#fbfbe8"/><rect x="307" y="12" width="17" height="4" fill="#fbfbe8"/><rect x="325" y="13" width="13" height="4" fill="#fbfbe8"/><rect x="338" y="12" width="7" height="4" fill="#fbfbe8"/><rect x="345" y="12" width="13" height="4" fill="#fbfbe8"/><rect x="358" y="12" width="17" height="4" fill="#fbfbe8"/><rect x="376" y="11" width="1" height="4" fill="#fbfbe8"/><rect x="380" y="10" width="17" height="4" fill="#fbfbe8"/><rect x="398" y="11" width="11" height="4" fill="#fbfbe8"/><rect x="409" y="11" width="11" height="4" fill="#fbfbe8"/><rect x="421" y="10" width="7" height="4" fill="#fbfbe8"/><rect x="428" y="11" width="9" height="4" fill="#fbfbe8"/><rect x="437" y="11" width="6" height="4" fill="#fbfbe8"/><rect x="443" y="8" width="12" height="2" fill="#fbfbe8"/><rect x="455" y="8" width="1" height="2" fill="#fbfbe8"/><rect x="456" y="8" width="14" height="2" fill="#fbfbe8"/><rect x="470" y="9" width="12" height="2" fill="#fbfbe8"/><rect x="482" y="7" width="17" height="2" fill="#fbfbe8"/><rect x="499" y="7" width="16" height="2" fill="#fbfbe8"/><rect x="515" y="8" width="8" height="2" fill="#fbfbe8"/><rect x="523" y="8" width="8" height="2" fill="#fbfbe8"/><rect x="532" y="8" width="9" height="2" fill="#fbfbe8"/><rect x="541" y="8" width="11" height="2" fill="#fbfbe8"/></svg>
<svg class="r" style="left:454px;top:136px;" width="555" height="21" viewBox="0 0 555 21"><rect x="3" y="16" width="6" height="2" fill="#fbfbe8"/><rect x="41" y="16" width="6" height="2" fill="#fbfbe8"/><rect x="52" y="16" width="12" height="2" fill="#fbfbe8"/><rect x="68" y="16" width="7" height="2" fill="#fbfbe8"/><rect x="79" y="16" width="6" height="2" fill="#fbfbe8"/><rect x="87" y="16" width="13" height="2" fill="#fbfbe8"/><rect x="103" y="16" width="6" height="2" fill="#fbfbe8"/><rect x="114" y="16" width="8" height="2" fill="#fbfbe8"/><rect x="125" y="16" width="6" height="2" fill="#fbfbe8"/><rect x="133" y="16" width="12" height="2" fill="#fbfbe8"/><rect x="163" y="16" width="7" height="2" fill="#fbfbe8"/><rect x="174" y="16" width="13" height="2" fill="#fbfbe8"/><rect x="190" y="16" width="7" height="2" fill="#fbfbe8"/><rect x="200" y="16" width="10" height="2" fill="#fbfbe8"/><rect x="212" y="16" width="14" height="2" fill="#fbfbe8"/><rect x="231" y="16" width="11" height="2" fill="#fbfbe8"/><rect x="266" y="16" width="14" height="2" fill="#fbfbe8"/><rect x="337" y="16" width="9" height="2" fill="#fbfbe8"/><rect x="358" y="16" width="13" height="2" fill="#fbfbe8"/><rect x="376" y="16" width="11" height="2" fill="#fbfbe8"/><rect x="390" y="16" width="11" height="2" fill="#fbfbe8"/><rect x="402" y="16" width="9" height="2" fill="#fbfbe8"/><rect x="414" y="16" width="9" height="2" fill="#fbfbe8"/><rect x="428" y="16" width="6" height="2" fill="#fbfbe8"/><rect x="476" y="16" width="11" height="2" fill="#fbfbe8"/><rect x="491" y="16" width="13" height="2" fill="#fbfbe8"/><rect x="505" y="16" width="8" height="2" fill="#fbfbe8"/><rect x="515" y="16" width="6" height="2" fill="#fbfbe8"/><rect x="2" y="19" width="14" height="2" fill="#fbfbe8"/><rect x="24" y="19" width="14" height="2" fill="#fbfbe8"/><rect x="54" y="19" width="9" height="2" fill="#fbfbe8"/><rect x="65" y="19" width="10" height="2" fill="#fbfbe8"/><rect x="80" y="19" width="11" height="2" fill="#fbfbe8"/><rect x="95" y="19" width="8" height="2" fill="#fbfbe8"/><rect x="106" y="19" width="13" height="2" fill="#fbfbe8"/><rect x="141" y="19" width="8" height="2" fill="#fbfbe8"/><rect x="154" y="19" width="14" height="2" fill="#fbfbe8"/><rect x="172" y="19" width="8" height="2" fill="#fbfbe8"/><rect x="182" y="19" width="8" height="2" fill="#fbfbe8"/><rect x="195" y="19" width="7" height="2" fill="#fbfbe8"/><rect x="205" y="19" width="14" height="2" fill="#fbfbe8"/><rect x="231" y="19" width="9" height="2" fill="#fbfbe8"/><rect x="241" y="19" width="7" height="2" fill="#fbfbe8"/><rect x="260" y="19" width="13" height="2" fill="#fbfbe8"/><rect x="278" y="19" width="14" height="2" fill="#fbfbe8"/><rect x="295" y="19" width="13" height="2" fill="#fbfbe8"/><rect x="343" y="19" width="13" height="2" fill="#fbfbe8"/><rect x="357" y="19" width="12" height="2" fill="#fbfbe8"/><rect x="370" y="19" width="9" height="2" fill="#fbfbe8"/><rect x="393" y="19" width="11" height="2" fill="#fbfbe8"/><rect x="406" y="19" width="13" height="2" fill="#fbfbe8"/><rect x="434" y="19" width="9" height="2" fill="#fbfbe8"/><rect x="447" y="19" width="14" height="2" fill="#fbfbe8"/><rect x="465" y="19" width="9" height="2" fill="#fbfbe8"/><rect x="475" y="19" width="11" height="2" fill="#fbfbe8"/><rect x="491" y="19" width="13" height="2" fill="#fbfbe8"/><rect x="505" y="19" width="12" height="2" fill="#fbfbe8"/><rect x="522" y="19" width="10" height="2" fill="#fbfbe8"/><rect x="542" y="19" width="7" height="2" fill="#fbfbe8"/></svg>
<svg class="r" style="left:454px;top:157px;" width="555" height="21" viewBox="0 0 555 21"><rect x="43" y="12" width="8" height="2" fill="#fbfbe8"/><rect x="88" y="12" width="7" height="2" fill="#fbfbe8"/><rect x="97" y="12" width="11" height="2" fill="#fbfbe8"/><rect x="128" y="12" width="6" height="2" fill="#fbfbe8"/><rect x="151" y="12" width="8" height="2" fill="#fbfbe8"/><rect x="197" y="12" width="8" height="2" fill="#fbfbe8"/><rect x="217" y="12" width="11" height="2" fill="#fbfbe8"/><rect x="359" y="12" width="8" height="2" fill="#fbfbe8"/><rect x="461" y="12" width="10" height="2" fill="#fbfbe8"/><rect x="475" y="12" width="7" height="2" fill="#fbfbe8"/><rect x="536" y="12" width="6" height="2" fill="#fbfbe8"/><rect x="12" y="14" width="7" height="2" fill="#fbfbe8"/><rect x="90" y="14" width="11" height="2" fill="#fbfbe8"/><rect x="103" y="14" width="8" height="2" fill="#fbfbe8"/><rect x="165" y="14" width="7" height="2" fill="#fbfbe8"/><rect x="175" y="14" width="9" height="2" fill="#fbfbe8"/><rect x="256" y="14" width="7" height="2" fill="#fbfbe8"/><rect x="265" y="14" width="11" height="2" fill="#fbfbe8"/><rect x="291" y="14" width="8" height="2" fill="#fbfbe8"/><rect x="336" y="14" width="9" height="2" fill="#fbfbe8"/><rect x="350" y="14" width="10" height="2" fill="#fbfbe8"/><rect x="391" y="14" width="9" height="2" fill="#fbfbe8"/><rect x="402" y="14" width="9" height="2" fill="#fbfbe8"/><rect x="415" y="14" width="10" height="2" fill="#fbfbe8"/><rect x="436" y="14" width="8" height="2" fill="#fbfbe8"/><rect x="465" y="14" width="5" height="2" fill="#fbfbe8"/><rect x="487" y="14" width="5" height="2" fill="#fbfbe8"/><rect x="522" y="14" width="9" height="2" fill="#fbfbe8"/><rect x="14" y="17" width="10" height="2" fill="#fbfbe8"/><rect x="27" y="17" width="8" height="2" fill="#fbfbe8"/><rect x="41" y="17" width="6" height="2" fill="#fbfbe8"/><rect x="52" y="17" width="9" height="2" fill="#fbfbe8"/><rect x="65" y="17" width="8" height="2" fill="#fbfbe8"/><rect x="76" y="17" width="8" height="2" fill="#fbfbe8"/><rect x="91" y="17" width="10" height="2" fill="#fbfbe8"/><rect x="108" y="17" width="6" height="2" fill="#fbfbe8"/><rect x="120" y="17" width="11" height="2" fill="#fbfbe8"/><rect x="150" y="17" width="10" height="2" fill="#fbfbe8"/><rect x="163" y="17" width="7" height="2" fill="#fbfbe8"/><rect x="174" y="17" width="5" height="2" fill="#fbfbe8"/><rect x="203" y="17" width="10" height="2" fill="#fbfbe8"/><rect x="219" y="17" width="7" height="2" fill="#fbfbe8"/><rect x="230" y="17" width="4" height="2" fill="#fbfbe8"/><rect x="240" y="17" width="9" height="2" fill="#fbfbe8"/><rect x="255" y="17" width="7" height="2" fill="#fbfbe8"/><rect x="265" y="17" width="10" height="2" fill="#fbfbe8"/><rect x="292" y="17" width="6" height="2" fill="#fbfbe8"/><rect x="321" y="17" width="4" height="2" fill="#fbfbe8"/><rect x="345" y="17" width="5" height="2" fill="#fbfbe8"/><rect x="365" y="17" width="11" height="2" fill="#fbfbe8"/><rect x="385" y="17" width="4" height="2" fill="#fbfbe8"/><rect x="393" y="17" width="6" height="2" fill="#fbfbe8"/><rect x="405" y="17" width="10" height="2" fill="#fbfbe8"/><rect x="417" y="17" width="5" height="2" fill="#fbfbe8"/><rect x="428" y="17" width="7" height="2" fill="#fbfbe8"/><rect x="438" y="17" width="4" height="2" fill="#fbfbe8"/><rect x="446" y="17" width="11" height="2" fill="#fbfbe8"/><rect x="461" y="17" width="7" height="2" fill="#fbfbe8"/><rect x="471" y="17" width="7" height="2" fill="#fbfbe8"/><rect x="483" y="17" width="8" height="2" fill="#fbfbe8"/><rect x="512" y="17" width="10" height="2" fill="#fbfbe8"/><rect x="538" y="17" width="11" height="2" fill="#fbfbe8"/></svg>
<div class="r" style="left:455.5px;top:449.5px;width:203.0px;height:21px;background:#6b7349;border-top:1.5px solid #1c2408;border-bottom:1.5px solid #101010;border-left:1.5px solid #101010;border-right:1.5px solid #101010;"></div>
<svg class="r" style="left:455.5px;top:449px;" width="203.0" height="22" viewBox="0 0 203.0 22"><line x1="0" y1="11.5" x2="203.0" y2="11.5" stroke="#2a4818" stroke-width="1"/><polygon points="2.6,10.6 3.1,10.5 3.6,10.0 4.1,10.3 4.6,10.6 5.1,10.6 5.1,12.4 4.6,12.4 4.1,12.7 3.6,13.0 3.1,12.5 2.6,12.4" fill="#2a4818"/><polygon points="7.2,10.6 7.8,10.6 8.2,10.1 8.8,10.3 9.2,10.6 9.8,10.6 9.8,12.4 9.2,12.4 8.8,12.7 8.2,12.9 7.8,12.4 7.2,12.4" fill="#2a4818"/><polygon points="13.6,10.6 14.1,10.4 14.6,10.0 15.1,10.3 15.6,10.6 16.1,10.6 16.1,12.4 15.6,12.4 15.1,12.7 14.6,13.0 14.1,12.6 13.6,12.4" fill="#2a4818"/><polygon points="20.6,10.6 21.1,10.6 21.6,10.3 22.1,10.4 22.6,10.6 23.1,10.6 23.1,12.4 22.6,12.4 22.1,12.6 21.6,12.7 21.1,12.4 20.6,12.4" fill="#2a4818"/><polygon points="28.2,10.6 28.8,10.2 29.2,9.8 29.8,9.6 30.2,10.5 30.8,10.6 30.8,12.4 30.2,12.5 29.8,13.4 29.2,13.2 28.8,12.8 28.2,12.4" fill="#2a4818"/><polygon points="36.9,10.6 37.4,10.6 37.9,10.5 38.4,10.2 38.9,9.8 39.4,10.4 39.9,10.6 40.4,10.6 40.9,10.6 40.9,12.4 40.4,12.4 39.9,12.4 39.4,12.6 38.9,13.2 38.4,12.8 37.9,12.5 37.4,12.4 36.9,12.4" fill="#2a4818"/><polygon points="45.2,10.6 45.8,10.6 46.2,10.6 46.8,10.6 47.2,10.6 47.8,10.6 47.8,12.4 47.2,12.4 46.8,12.4 46.2,12.4 45.8,12.4 45.2,12.4" fill="#2a4818"/><polygon points="51.2,10.6 51.8,10.6 52.2,10.2 52.8,10.6 53.2,10.6 53.8,10.6 53.8,12.4 53.2,12.4 52.8,12.4 52.2,12.8 51.8,12.4 51.2,12.4" fill="#2a4818"/><polygon points="57.2,10.6 57.8,10.6 58.2,9.8 58.8,10.0 59.2,10.5 59.8,10.6 59.8,12.4 59.2,12.5 58.8,13.0 58.2,13.2 57.8,12.4 57.2,12.4" fill="#2a4818"/><polygon points="62.9,10.6 63.4,10.6 63.9,10.5 64.4,10.4 64.9,10.6 65.4,10.6 65.4,12.4 64.9,12.4 64.4,12.6 63.9,12.5 63.4,12.4 62.9,12.4" fill="#2a4818"/><polygon points="69.2,10.6 69.8,10.6 70.2,10.0 70.8,10.4 71.2,10.6 71.8,10.6 71.8,12.4 71.2,12.4 70.8,12.6 70.2,13.0 69.8,12.4 69.2,12.4" fill="#2a4818"/><polygon points="78.2,10.6 78.8,10.6 79.2,10.3 79.8,10.6 80.2,10.6 80.8,10.6 80.8,12.4 80.2,12.4 79.8,12.4 79.2,12.7 78.8,12.4 78.2,12.4" fill="#2a4818"/><polygon points="81.2,10.6 81.8,10.6 82.2,10.3 82.8,10.4 83.2,10.6 83.8,10.6 83.8,12.4 83.2,12.4 82.8,12.6 82.2,12.7 81.8,12.4 81.2,12.4" fill="#2a4818"/><polygon points="84.2,10.6 84.8,10.5 85.2,10.0 85.8,10.1 86.2,10.6 86.8,10.6 86.8,12.4 86.2,12.4 85.8,12.9 85.2,13.0 84.8,12.5 84.2,12.4" fill="#2a4818"/><polygon points="89.9,10.6 90.4,10.6 90.9,10.3 91.4,10.5 91.9,10.6 92.4,10.6 92.4,12.4 91.9,12.4 91.4,12.5 90.9,12.7 90.4,12.4 89.9,12.4" fill="#2a4818"/><polygon points="94.5,10.6 95.0,10.6 95.5,10.3 96.0,10.3 96.5,10.6 97.0,10.6 97.0,12.4 96.5,12.4 96.0,12.7 95.5,12.7 95.0,12.4 94.5,12.4" fill="#2a4818"/><polygon points="100.2,10.6 100.8,10.6 101.2,10.0 101.8,10.2 102.2,10.6 102.8,10.6 102.8,12.4 102.2,12.4 101.8,12.8 101.2,13.0 100.8,12.4 100.2,12.4" fill="#2a4818"/><polygon points="107.2,10.6 107.8,10.6 108.2,10.6 108.8,10.6 109.2,10.6 109.8,10.6 109.8,12.4 109.2,12.4 108.8,12.4 108.2,12.4 107.8,12.4 107.2,12.4" fill="#2a4818"/><polygon points="112.5,10.6 113.0,10.4 113.5,10.1 114.0,10.3 114.5,10.6 115.0,10.6 115.0,12.4 114.5,12.4 114.0,12.7 113.5,12.9 113.0,12.6 112.5,12.4" fill="#2a4818"/><polygon points="118.2,10.6 118.8,10.6 119.2,10.5 119.8,10.5 120.2,10.6 120.8,10.6 120.8,12.4 120.2,12.4 119.8,12.5 119.2,12.5 118.8,12.4 118.2,12.4" fill="#2a4818"/><polygon points="124.2,10.6 124.8,10.6 125.2,10.4 125.8,10.5 126.2,10.6 126.8,10.6 126.8,12.4 126.2,12.4 125.8,12.5 125.2,12.6 124.8,12.4 124.2,12.4" fill="#2a4818"/><polygon points="129.5,10.6 130.0,10.5 130.5,9.8 131.0,10.2 131.5,10.6 132.0,10.6 132.0,12.4 131.5,12.4 131.0,12.8 130.5,13.2 130.0,12.5 129.5,12.4" fill="#2a4818"/><polygon points="134.2,10.6 134.8,10.3 135.2,9.4 135.8,9.6 136.2,10.5 136.8,10.6 136.8,12.4 136.2,12.5 135.8,13.4 135.2,13.6 134.8,12.7 134.2,12.4" fill="#2a4818"/><polygon points="138.2,10.6 138.8,10.6 139.2,10.6 139.8,10.6 140.2,10.6 140.8,10.6 140.8,12.4 140.2,12.4 139.8,12.4 139.2,12.4 138.8,12.4 138.2,12.4" fill="#2a4818"/><polygon points="141.9,10.6 142.4,10.2 142.9,9.3 143.4,9.6 143.9,10.2 144.4,10.6 144.4,12.4 143.9,12.8 143.4,13.4 142.9,13.7 142.4,12.8 141.9,12.4" fill="#2a4818"/><polygon points="145.2,10.6 145.8,10.5 146.2,10.1 146.8,10.3 147.2,10.6 147.8,10.6 147.8,12.4 147.2,12.4 146.8,12.7 146.2,12.9 145.8,12.5 145.2,12.4" fill="#2a4818"/><polygon points="149.5,10.6 150.0,10.6 150.5,10.5 151.0,10.6 151.5,10.6 152.0,10.6 152.0,12.4 151.5,12.4 151.0,12.4 150.5,12.5 150.0,12.4 149.5,12.4" fill="#2a4818"/><polygon points="154.2,10.6 154.8,10.6 155.2,10.2 155.8,10.4 156.2,10.6 156.8,10.6 156.8,12.4 156.2,12.4 155.8,12.6 155.2,12.8 154.8,12.4 154.2,12.4" fill="#2a4818"/><polygon points="158.2,10.6 158.8,10.6 159.2,10.6 159.8,10.6 160.2,10.6 160.8,10.6 160.8,12.4 160.2,12.4 159.8,12.4 159.2,12.4 158.8,12.4 158.2,12.4" fill="#2a4818"/><polygon points="162.8,10.6 163.3,10.6 163.8,10.6 164.3,10.3 164.8,10.1 165.3,10.6 165.8,10.6 166.3,10.6 166.8,10.6 166.8,12.4 166.3,12.4 165.8,12.4 165.3,12.4 164.8,12.9 164.3,12.7 163.8,12.4 163.3,12.4 162.8,12.4" fill="#2a4818"/><polygon points="169.8,10.6 170.3,10.6 170.8,10.5 171.3,10.2 171.8,9.8 172.3,10.1 172.8,10.5 173.3,10.6 173.8,10.6 173.8,12.4 173.3,12.4 172.8,12.5 172.3,12.9 171.8,13.2 171.3,12.8 170.8,12.5 170.3,12.4 169.8,12.4" fill="#2a4818"/><polygon points="175.9,10.6 176.4,10.6 176.9,10.6 177.4,10.6 177.9,10.6 178.4,10.6 178.4,12.4 177.9,12.4 177.4,12.4 176.9,12.4 176.4,12.4 175.9,12.4" fill="#2a4818"/><polygon points="179.2,10.6 179.8,10.6 180.2,10.4 180.8,10.5 181.2,10.6 181.8,10.6 181.8,12.4 181.2,12.4 180.8,12.5 180.2,12.6 179.8,12.4 179.2,12.4" fill="#2a4818"/><polygon points="184.0,10.6 184.5,10.6 185.0,10.4 185.5,10.4 186.0,10.6 186.5,10.6 186.5,12.4 186.0,12.4 185.5,12.6 185.0,12.6 184.5,12.4 184.0,12.4" fill="#2a4818"/><polygon points="187.5,10.6 188.0,10.5 188.5,9.8 189.0,10.0 189.5,10.5 190.0,10.6 190.0,12.4 189.5,12.5 189.0,13.0 188.5,13.2 188.0,12.5 187.5,12.4" fill="#2a4818"/><polygon points="21.5,10.6 21.9,9.6 22.3,10.4 22.3,12.6 21.9,13.4 21.5,12.4" fill="#2a4818"/></svg>
<div class="r" style="left:660.5px;top:470.3px;width:348.5px;height:21px;background:#c5d386;border-top:1.5px solid #1c2408;border-bottom:1.5px solid #101010;border-left:1.5px solid #101010;"></div>
<svg class="r" style="left:660.5px;top:470px;" width="348.5" height="22" viewBox="0 0 348.5 22"><line x1="0" y1="11.5" x2="348.5" y2="11.5" stroke="#2a4818" stroke-width="1"/><polygon points="2.0,10.6 2.5,10.6 3.0,10.0 3.5,9.8 4.0,9.9 4.5,10.2 5.0,10.1 5.5,10.3 6.0,10.6 6.5,10.5 7.0,10.6 7.5,10.6 8.0,10.6 8.5,10.6 8.5,12.4 8.0,12.4 7.5,12.4 7.0,12.4 6.5,12.5 6.0,12.4 5.5,12.7 5.0,12.9 4.5,12.8 4.0,13.1 3.5,13.2 3.0,13.0 2.5,12.4 2.0,12.4" fill="#2a4818"/><polygon points="8.5,10.6 9.0,10.6 9.5,9.9 10.0,10.1 10.5,10.3 11.0,10.5 11.5,10.6 12.0,10.6 12.6,10.6 13.1,10.6 13.6,10.6 14.1,10.6 14.6,10.6 15.1,10.6 15.6,10.6 16.1,10.6 16.1,12.4 15.6,12.4 15.1,12.4 14.6,12.4 14.1,12.4 13.6,12.4 13.1,12.4 12.6,12.4 12.0,12.4 11.5,12.4 11.0,12.5 10.5,12.7 10.0,12.9 9.5,13.1 9.0,12.4 8.5,12.4" fill="#2a4818"/><polygon points="50.1,10.6 50.6,10.4 51.1,9.8 51.6,9.5 52.1,9.9 52.6,10.0 53.1,10.1 53.5,10.1 54.0,10.3 54.5,10.4 55.0,10.6 55.5,10.6 56.0,10.5 56.5,10.6 57.0,10.6 57.0,12.4 56.5,12.4 56.0,12.5 55.5,12.4 55.0,12.4 54.5,12.6 54.0,12.7 53.5,12.9 53.1,12.9 52.6,13.0 52.1,13.1 51.6,13.5 51.1,13.2 50.6,12.6 50.1,12.4" fill="#2a4818"/><polygon points="57.0,10.6 57.5,10.2 58.0,10.4 58.5,10.6 59.0,10.6 59.5,10.6 60.0,10.6 60.5,10.6 61.0,10.6 61.5,10.6 61.5,12.4 61.0,12.4 60.5,12.4 60.0,12.4 59.5,12.4 59.0,12.4 58.5,12.4 58.0,12.6 57.5,12.8 57.0,12.4" fill="#2a4818"/><polygon points="64.5,10.6 65.0,10.6 65.5,10.5 66.0,9.9 66.5,9.5 67.0,9.8 67.5,10.1 68.0,10.5 68.5,10.4 69.0,10.6 69.5,10.6 70.0,10.6 70.5,10.6 70.5,12.4 70.0,12.4 69.5,12.4 69.0,12.4 68.5,12.6 68.0,12.5 67.5,12.9 67.0,13.2 66.5,13.5 66.0,13.1 65.5,12.5 65.0,12.4 64.5,12.4" fill="#2a4818"/><polygon points="70.5,10.6 71.0,10.6 71.5,10.4 72.0,10.2 72.5,10.4 73.0,10.4 73.5,10.5 74.0,10.6 74.5,10.6 75.0,10.6 75.5,10.6 76.0,10.6 76.5,10.6 77.0,10.6 77.5,10.6 78.0,10.6 78.5,10.6 79.0,10.6 79.5,10.6 80.0,10.6 80.5,10.6 81.0,10.6 81.5,10.6 82.0,10.6 82.5,10.6 83.0,10.6 83.5,10.6 84.0,10.6 84.5,10.6 85.0,10.6 85.5,10.6 86.0,10.6 86.5,10.6 87.0,10.6 87.5,10.6 88.0,10.6 88.5,10.6 89.0,10.6 89.5,10.6 89.5,12.4 89.0,12.4 88.5,12.4 88.0,12.4 87.5,12.4 87.0,12.4 86.5,12.4 86.0,12.4 85.5,12.4 85.0,12.4 84.5,12.4 84.0,12.4 83.5,12.4 83.0,12.4 82.5,12.4 82.0,12.4 81.5,12.4 81.0,12.4 80.5,12.4 80.0,12.4 79.5,12.4 79.0,12.4 78.5,12.4 78.0,12.4 77.5,12.4 77.0,12.4 76.5,12.4 76.0,12.4 75.5,12.4 75.0,12.4 74.5,12.4 74.0,12.4 73.5,12.5 73.0,12.6 72.5,12.6 72.0,12.8 71.5,12.6 71.0,12.4 70.5,12.4" fill="#2a4818"/><polygon points="89.5,10.6 90.0,10.6 90.5,10.2 91.0,9.9 91.5,9.4 92.0,9.8 92.5,10.2 93.0,10.4 93.5,10.6 94.0,10.6 94.5,10.6 94.5,12.4 94.0,12.4 93.5,12.4 93.0,12.6 92.5,12.8 92.0,13.2 91.5,13.6 91.0,13.1 90.5,12.8 90.0,12.4 89.5,12.4" fill="#2a4818"/><polygon points="94.5,10.6 95.0,10.6 95.5,10.5 96.0,10.6 96.5,10.6 97.0,10.6 97.5,10.6 97.5,12.4 97.0,12.4 96.5,12.4 96.0,12.4 95.5,12.5 95.0,12.4 94.5,12.4" fill="#2a4818"/><polygon points="137.3,10.6 137.8,10.6 138.3,10.6 138.8,10.3 139.3,10.0 139.8,10.1 140.3,10.3 140.8,10.4 141.2,10.4 141.7,10.6 142.2,10.6 142.7,10.6 143.2,10.6 143.7,10.6 144.2,10.6 144.2,12.4 143.7,12.4 143.2,12.4 142.7,12.4 142.2,12.4 141.7,12.4 141.2,12.6 140.8,12.6 140.3,12.7 139.8,12.9 139.3,13.0 138.8,12.7 138.3,12.4 137.8,12.4 137.3,12.4" fill="#2a4818"/><polygon points="145.9,10.6 146.4,10.5 146.9,10.1 147.4,9.3 147.9,9.6 148.5,10.3 149.0,10.3 149.5,10.4 150.0,10.6 150.5,10.6 150.5,12.4 150.0,12.4 149.5,12.6 149.0,12.7 148.5,12.7 147.9,13.4 147.4,13.7 146.9,12.9 146.4,12.5 145.9,12.4" fill="#2a4818"/><polygon points="150.5,10.6 151.0,10.6 151.5,10.3 152.0,10.6 152.5,10.6 153.0,10.6 153.5,10.6 153.5,12.4 153.0,12.4 152.5,12.4 152.0,12.4 151.5,12.7 151.0,12.4 150.5,12.4" fill="#2a4818"/><polygon points="155.9,10.6 156.4,10.6 156.9,10.4 157.4,10.3 158.0,10.2 158.5,10.3 159.0,10.6 159.5,10.6 160.0,10.6 160.5,10.6 161.0,10.6 161.5,10.6 162.0,10.6 162.6,10.6 163.1,10.6 163.6,10.6 164.1,10.6 164.1,12.4 163.6,12.4 163.1,12.4 162.6,12.4 162.0,12.4 161.5,12.4 161.0,12.4 160.5,12.4 160.0,12.4 159.5,12.4 159.0,12.4 158.5,12.7 158.0,12.8 157.4,12.7 156.9,12.6 156.4,12.4 155.9,12.4" fill="#2a4818"/><polygon points="167.0,10.6 167.5,10.6 168.0,10.3 168.5,10.0 169.0,9.6 169.5,8.9 170.0,9.8 170.5,9.8 171.0,10.2 171.5,10.1 172.0,10.5 172.5,10.4 173.0,10.6 173.5,10.5 173.5,12.5 173.0,12.4 172.5,12.6 172.0,12.5 171.5,12.9 171.0,12.8 170.5,13.2 170.0,13.2 169.5,14.1 169.0,13.4 168.5,13.0 168.0,12.7 167.5,12.4 167.0,12.4" fill="#2a4818"/><polygon points="197.5,10.6 198.0,10.3 198.5,9.8 199.0,10.2 199.5,10.3 200.0,10.4 200.5,10.6 201.0,10.6 201.5,10.6 201.5,12.4 201.0,12.4 200.5,12.4 200.0,12.6 199.5,12.7 199.0,12.8 198.5,13.2 198.0,12.7 197.5,12.4" fill="#2a4818"/><polygon points="201.5,10.6 202.0,10.4 202.5,9.7 202.9,10.3 203.4,10.3 203.9,10.6 204.4,10.5 204.9,10.6 205.3,10.6 205.8,10.6 206.3,10.6 206.3,12.4 205.8,12.4 205.3,12.4 204.9,12.4 204.4,12.5 203.9,12.4 203.4,12.7 202.9,12.7 202.5,13.3 202.0,12.6 201.5,12.4" fill="#2a4818"/><polygon points="206.3,10.6 206.8,10.6 207.3,10.4 207.8,10.4 208.3,10.4 208.9,10.5 209.4,10.5 209.9,10.6 210.4,10.6 210.9,10.6 211.4,10.6 211.9,10.6 212.4,10.6 212.9,10.6 213.5,10.6 214.0,10.6 214.5,10.6 215.0,10.6 215.5,10.6 215.5,12.4 215.0,12.4 214.5,12.4 214.0,12.4 213.5,12.4 212.9,12.4 212.4,12.4 211.9,12.4 211.4,12.4 210.9,12.4 210.4,12.4 209.9,12.4 209.4,12.5 208.9,12.5 208.3,12.6 207.8,12.6 207.3,12.6 206.8,12.4 206.3,12.4" fill="#2a4818"/><polygon points="215.5,10.6 216.0,10.6 216.5,10.3 217.0,9.9 217.5,9.1 218.0,9.7 218.5,9.6 219.0,10.0 219.5,10.4 220.0,10.5 220.5,10.4 221.0,10.6 221.5,10.6 221.5,12.4 221.0,12.4 220.5,12.6 220.0,12.5 219.5,12.6 219.0,13.0 218.5,13.4 218.0,13.3 217.5,13.9 217.0,13.1 216.5,12.7 216.0,12.4 215.5,12.4" fill="#2a4818"/><polygon points="221.5,10.6 222.0,10.6 222.5,10.0 223.1,10.5 223.6,10.4 224.1,10.6 224.6,10.6 225.2,10.6 225.7,10.6 226.2,10.6 226.2,12.4 225.7,12.4 225.2,12.4 224.6,12.4 224.1,12.4 223.6,12.6 223.1,12.5 222.5,13.0 222.0,12.4 221.5,12.4" fill="#2a4818"/><polygon points="226.2,10.6 226.7,10.6 227.2,10.5 227.7,10.2 228.2,9.4 228.7,9.3 229.2,9.7 229.6,10.3 230.1,10.2 230.6,10.4 231.1,10.6 231.6,10.6 232.1,10.6 232.1,12.4 231.6,12.4 231.1,12.4 230.6,12.6 230.1,12.8 229.6,12.7 229.2,13.3 228.7,13.7 228.2,13.6 227.7,12.8 227.2,12.5 226.7,12.4 226.2,12.4" fill="#2a4818"/><polygon points="238.5,10.6 239.0,10.6 239.5,10.2 240.0,10.5 240.5,10.6 241.0,10.6 241.5,10.6 242.0,10.6 242.5,10.6 242.5,12.4 242.0,12.4 241.5,12.4 241.0,12.4 240.5,12.4 240.0,12.5 239.5,12.8 239.0,12.4 238.5,12.4" fill="#2a4818"/><polygon points="245.3,10.6 245.8,10.6 246.3,10.3 246.8,10.2 247.3,10.1 247.8,10.1 248.3,10.5 248.8,10.3 249.3,10.5 249.8,10.4 250.4,10.6 250.9,10.5 251.4,10.5 251.9,10.5 252.4,10.6 252.9,10.6 253.4,10.6 253.9,10.6 254.4,10.6 254.9,10.6 255.4,10.6 255.9,10.6 256.4,10.6 256.9,10.6 257.4,10.6 257.9,10.6 258.4,10.6 259.0,10.6 259.5,10.6 260.0,10.6 260.5,10.6 261.0,10.6 261.5,10.6 262.0,10.6 262.5,10.6 263.0,10.6 263.5,10.6 263.5,12.4 263.0,12.4 262.5,12.4 262.0,12.4 261.5,12.4 261.0,12.4 260.5,12.4 260.0,12.4 259.5,12.4 259.0,12.4 258.4,12.4 257.9,12.4 257.4,12.4 256.9,12.4 256.4,12.4 255.9,12.4 255.4,12.4 254.9,12.4 254.4,12.4 253.9,12.4 253.4,12.4 252.9,12.4 252.4,12.4 251.9,12.5 251.4,12.5 250.9,12.5 250.4,12.4 249.8,12.6 249.3,12.5 248.8,12.7 248.3,12.5 247.8,12.9 247.3,12.9 246.8,12.8 246.3,12.7 245.8,12.4 245.3,12.4" fill="#2a4818"/><polygon points="269.3,10.6 269.8,10.1 270.3,9.5 270.8,9.5 271.3,9.6 271.8,9.9 272.3,9.6 272.8,9.7 273.3,9.9 273.8,10.1 274.2,10.1 274.7,10.3 275.2,10.4 275.7,10.4 276.2,10.4 276.7,10.6 277.2,10.4 277.7,10.5 278.2,10.5 278.7,10.6 278.7,12.4 278.2,12.5 277.7,12.5 277.2,12.6 276.7,12.4 276.2,12.6 275.7,12.6 275.2,12.6 274.7,12.7 274.2,12.9 273.8,12.9 273.3,13.1 272.8,13.3 272.3,13.4 271.8,13.1 271.3,13.4 270.8,13.5 270.3,13.5 269.8,12.9 269.3,12.4" fill="#2a4818"/><polygon points="299.2,10.6 299.8,10.4 300.3,10.6 300.9,10.6 300.9,12.4 300.3,12.4 299.8,12.6 299.2,12.4" fill="#2a4818"/><polygon points="323.2,10.6 323.7,10.6 324.2,10.3 324.7,10.2 325.2,10.2 325.6,10.4 326.1,10.5 326.6,10.5 327.1,10.6 327.6,10.6 328.1,10.6 328.6,10.6 329.1,10.6 329.6,10.6 330.1,10.6 330.5,10.6 331.0,10.6 331.5,10.6 332.0,10.6 332.5,10.6 332.5,12.4 332.0,12.4 331.5,12.4 331.0,12.4 330.5,12.4 330.1,12.4 329.6,12.4 329.1,12.4 328.6,12.4 328.1,12.4 327.6,12.4 327.1,12.4 326.6,12.5 326.1,12.5 325.6,12.6 325.2,12.8 324.7,12.8 324.2,12.7 323.7,12.4 323.2,12.4" fill="#2a4818"/><polygon points="332.5,10.6 333.0,10.6 333.5,10.5 334.0,10.2 334.5,9.6 335.0,9.7 335.5,8.9 336.0,9.1 336.5,9.8 337.0,9.7 337.4,10.1 337.9,10.2 338.4,10.3 338.9,10.4 339.4,10.4 339.9,10.5 340.4,10.6 340.9,10.4 341.4,10.6 341.9,10.5 341.9,12.5 341.4,12.4 340.9,12.6 340.4,12.4 339.9,12.5 339.4,12.6 338.9,12.6 338.4,12.7 337.9,12.8 337.4,12.9 337.0,13.3 336.5,13.2 336.0,13.9 335.5,14.1 335.0,13.3 334.5,13.4 334.0,12.8 333.5,12.5 333.0,12.4 332.5,12.4" fill="#2a4818"/><polygon points="343.1,10.6 343.6,10.6 344.1,10.6 344.7,10.6 345.2,10.6 345.7,10.6 346.2,10.6 346.8,10.6 347.3,10.6 347.8,10.6 347.8,12.4 347.3,12.4 346.8,12.4 346.2,12.4 345.7,12.4 345.2,12.4 344.7,12.4 344.1,12.4 343.6,12.4 343.1,12.4" fill="#2a4818"/></svg>
<div class="r" style="left:454.5px;top:491px;width:554.5px;height:21px;background:#c5d386;border-top:1.5px solid #1c2408;border-bottom:1.5px solid #101010;"></div>
<svg class="r" style="left:454.5px;top:491px;" width="554.5" height="22" viewBox="0 0 554.5 22"><line x1="0" y1="11.5" x2="554.5" y2="11.5" stroke="#2a4818" stroke-width="1"/><polygon points="1.5,10.6 2.0,10.6 2.5,9.9 3.0,10.6 3.5,10.6 3.5,12.4 3.0,12.4 2.5,13.1 2.0,12.4 1.5,12.4" fill="#2a4818"/><polygon points="4.5,10.0 5.0,9.8 5.5,9.7 6.0,9.6 6.5,9.2 7.0,9.1 7.5,8.9 8.0,9.0 8.5,8.8 9.0,8.6 9.5,8.0 10.0,8.0 10.5,7.2 11.0,6.6 11.5,7.2 12.0,7.8 12.5,8.1 13.0,9.1 13.5,8.9 14.0,9.4 14.5,9.9 15.0,9.5 15.0,13.5 14.5,13.1 14.0,13.6 13.5,14.1 13.0,13.9 12.5,14.9 12.0,15.2 11.5,15.8 11.0,16.4 10.5,15.8 10.0,15.0 9.5,15.0 9.0,14.4 8.5,14.2 8.0,14.0 7.5,14.1 7.0,13.9 6.5,13.8 6.0,13.4 5.5,13.3 5.0,13.2 4.5,13.0" fill="#2a4818"/><polygon points="32.5,9.8 33.0,6.5 33.5,5.6 34.0,6.0 34.5,7.1 35.0,7.8 35.5,7.0 36.0,7.2 36.5,8.3 37.0,8.3 37.5,8.5 38.0,8.2 38.5,8.2 39.0,8.9 39.5,8.9 40.0,8.6 40.5,9.0 41.0,9.3 41.5,9.2 42.0,9.5 42.5,9.1 43.0,9.4 43.5,9.5 43.5,13.5 43.0,13.6 42.5,13.9 42.0,13.5 41.5,13.8 41.0,13.7 40.5,14.0 40.0,14.4 39.5,14.1 39.0,14.1 38.5,14.8 38.0,14.8 37.5,14.5 37.0,14.7 36.5,14.7 36.0,15.8 35.5,16.0 35.0,15.2 34.5,15.9 34.0,17.0 33.5,17.4 33.0,16.5 32.5,13.2" fill="#2a4818"/><polygon points="44.0,10.4 44.5,10.0 45.0,8.8 45.5,8.5 46.1,8.6 46.6,8.6 47.1,9.0 47.6,9.3 48.1,9.5 48.6,9.8 49.1,9.9 49.6,10.1 50.1,10.2 50.7,9.9 51.2,10.1 51.7,10.1 52.2,10.2 52.2,12.8 51.7,12.9 51.2,12.9 50.7,13.1 50.1,12.8 49.6,12.9 49.1,13.1 48.6,13.2 48.1,13.5 47.6,13.7 47.1,14.0 46.6,14.4 46.1,14.4 45.5,14.5 45.0,14.2 44.5,13.0 44.0,12.6" fill="#2a4818"/><polygon points="54.5,10.6 55.0,10.6 55.5,10.2 56.0,10.3 56.6,10.6 57.1,10.6 57.6,10.6 58.1,10.6 58.1,12.4 57.6,12.4 57.1,12.4 56.6,12.4 56.0,12.7 55.5,12.8 55.0,12.4 54.5,12.4" fill="#2a4818"/><polygon points="58.1,10.0 58.6,9.4 59.1,9.7 59.6,9.0 60.1,9.2 60.6,8.5 61.1,8.1 61.6,7.7 62.1,8.1 62.6,7.1 63.1,6.5 63.6,6.2 64.1,6.3 64.6,5.1 65.1,5.9 65.6,6.5 66.1,6.6 66.5,7.3 67.0,7.2 67.5,8.1 68.0,7.8 68.5,8.0 69.0,7.9 69.5,8.3 70.0,8.7 70.5,8.5 71.0,8.6 71.5,9.1 72.0,8.9 72.5,9.3 73.0,9.2 73.5,9.2 74.0,9.6 74.5,9.1 74.5,13.9 74.0,13.4 73.5,13.8 73.0,13.8 72.5,13.7 72.0,14.1 71.5,13.9 71.0,14.4 70.5,14.5 70.0,14.3 69.5,14.7 69.0,15.1 68.5,15.0 68.0,15.2 67.5,14.9 67.0,15.8 66.5,15.7 66.1,16.4 65.6,16.5 65.1,17.1 64.6,17.9 64.1,16.7 63.6,16.8 63.1,16.5 62.6,15.9 62.1,14.9 61.6,15.3 61.1,14.9 60.6,14.5 60.1,13.8 59.6,14.0 59.1,13.3 58.6,13.6 58.1,13.0" fill="#2a4818"/><polygon points="75.5,10.6 76.0,10.6 76.5,10.6 77.0,10.6 77.5,10.5 78.0,10.4 78.5,9.9 79.0,10.4 79.5,10.6 80.0,10.6 80.5,10.6 81.0,10.6 81.5,10.6 81.5,12.4 81.0,12.4 80.5,12.4 80.0,12.4 79.5,12.4 79.0,12.6 78.5,13.1 78.0,12.6 77.5,12.5 77.0,12.4 76.5,12.4 76.0,12.4 75.5,12.4" fill="#2a4818"/><polygon points="115.5,9.7 116.0,9.4 116.5,9.2 117.0,8.8 117.5,9.1 118.0,8.7 118.5,8.1 119.0,8.4 119.5,7.9 120.0,7.5 120.5,7.0 121.0,6.6 121.5,5.8 122.0,6.9 122.5,5.2 123.0,5.4 123.5,4.9 124.0,6.0 124.5,6.1 125.0,6.9 125.5,7.4 126.0,6.7 126.5,7.2 127.0,8.1 127.5,8.3 128.0,8.1 128.5,7.9 129.0,8.4 129.5,8.4 130.0,8.6 130.5,8.4 131.0,8.7 131.5,9.1 132.0,9.2 132.5,9.0 133.0,8.9 133.0,14.1 132.5,14.0 132.0,13.8 131.5,13.9 131.0,14.3 130.5,14.6 130.0,14.4 129.5,14.6 129.0,14.6 128.5,15.1 128.0,14.9 127.5,14.7 127.0,14.9 126.5,15.8 126.0,16.3 125.5,15.6 125.0,16.1 124.5,16.9 124.0,17.0 123.5,18.1 123.0,17.6 122.5,17.8 122.0,16.1 121.5,17.2 121.0,16.4 120.5,16.0 120.0,15.5 119.5,15.1 119.0,14.6 118.5,14.9 118.0,14.3 117.5,13.9 117.0,14.2 116.5,13.8 116.0,13.6 115.5,13.3" fill="#2a4818"/><polygon points="132.5,10.6 133.0,10.6 133.5,10.3 134.0,10.4 134.5,10.5 135.0,10.5 135.5,10.6 136.0,10.5 136.5,10.6 137.0,10.6 137.5,10.6 138.0,10.6 138.5,10.6 139.0,10.6 139.5,10.6 140.0,10.6 140.5,10.6 141.0,10.6 141.5,10.6 142.0,10.6 142.5,10.6 143.0,10.6 143.5,10.6 144.0,10.6 144.5,10.6 145.0,10.6 145.5,10.6 145.5,12.4 145.0,12.4 144.5,12.4 144.0,12.4 143.5,12.4 143.0,12.4 142.5,12.4 142.0,12.4 141.5,12.4 141.0,12.4 140.5,12.4 140.0,12.4 139.5,12.4 139.0,12.4 138.5,12.4 138.0,12.4 137.5,12.4 137.0,12.4 136.5,12.4 136.0,12.5 135.5,12.4 135.0,12.5 134.5,12.5 134.0,12.6 133.5,12.7 133.0,12.4 132.5,12.4" fill="#2a4818"/><polygon points="151.2,9.8 151.7,6.4 152.2,6.5 152.6,7.9 153.1,8.2 153.6,8.7 154.1,9.1 154.6,9.1 155.1,9.3 155.5,9.3 156.0,9.6 156.5,9.3 156.5,13.7 156.0,13.4 155.5,13.7 155.1,13.7 154.6,13.9 154.1,13.9 153.6,14.3 153.1,14.8 152.6,15.1 152.2,16.5 151.7,16.6 151.2,13.2" fill="#2a4818"/><polygon points="159.2,9.9 159.7,7.1 160.2,7.9 160.7,8.1 161.2,8.8 161.7,9.1 162.1,9.0 162.6,9.6 163.1,9.2 163.6,9.9 164.1,9.5 164.1,13.5 163.6,13.1 163.1,13.8 162.6,13.4 162.1,14.0 161.7,13.9 161.2,14.2 160.7,14.9 160.2,15.1 159.7,15.9 159.2,13.1" fill="#2a4818"/><polygon points="164.1,10.6 164.6,10.1 165.1,10.4 165.6,10.5 166.1,10.6 166.5,10.6 167.0,10.6 167.5,10.6 168.0,10.6 168.5,10.6 168.5,12.4 168.0,12.4 167.5,12.4 167.0,12.4 166.5,12.4 166.1,12.4 165.6,12.5 165.1,12.6 164.6,12.9 164.1,12.4" fill="#2a4818"/><polygon points="170.5,10.4 171.0,9.8 171.5,9.1 171.9,8.4 172.4,7.8 172.9,7.8 173.4,8.4 173.9,8.8 174.4,9.6 174.8,9.9 175.3,9.7 175.8,9.8 175.8,13.2 175.3,13.3 174.8,13.1 174.4,13.4 173.9,14.2 173.4,14.6 172.9,15.2 172.4,15.2 171.9,14.6 171.5,13.9 171.0,13.2 170.5,12.6" fill="#2a4818"/><polygon points="175.5,10.6 176.0,10.6 176.5,10.3 177.0,10.1 177.5,9.8 178.0,10.0 178.5,10.6 179.0,10.6 179.5,10.6 179.5,12.4 179.0,12.4 178.5,12.4 178.0,13.0 177.5,13.2 177.0,12.9 176.5,12.7 176.0,12.4 175.5,12.4" fill="#2a4818"/><polygon points="181.1,9.5 181.6,9.1 182.1,8.7 182.6,9.0 183.1,8.8 183.6,8.5 184.1,7.6 184.6,7.1 185.1,6.3 185.6,6.4 186.1,5.9 186.6,4.9 187.1,4.5 187.6,4.8 188.0,5.0 188.5,6.1 189.0,7.1 189.5,6.6 190.0,7.1 190.5,7.0 191.0,7.7 191.5,8.4 192.0,8.0 192.5,8.4 193.0,8.9 193.5,8.7 194.0,8.5 194.5,8.8 194.5,14.2 194.0,14.5 193.5,14.3 193.0,14.1 192.5,14.6 192.0,15.0 191.5,14.6 191.0,15.3 190.5,16.0 190.0,15.9 189.5,16.4 189.0,15.9 188.5,16.9 188.0,18.0 187.6,18.2 187.1,18.5 186.6,18.1 186.1,17.1 185.6,16.6 185.1,16.7 184.6,15.9 184.1,15.4 183.6,14.5 183.1,14.2 182.6,14.0 182.1,14.3 181.6,13.9 181.1,13.5" fill="#2a4818"/><polygon points="194.5,10.6 195.0,10.6 195.5,10.0 196.0,10.0 196.5,10.2 197.0,10.5 197.5,10.6 198.0,10.5 198.5,10.6 199.0,10.6 199.5,10.6 200.0,10.6 200.5,10.6 201.0,10.6 201.5,10.6 202.0,10.6 202.5,10.6 203.0,10.6 203.5,10.6 204.0,10.6 204.5,10.6 205.0,10.6 205.5,10.6 205.5,12.4 205.0,12.4 204.5,12.4 204.0,12.4 203.5,12.4 203.0,12.4 202.5,12.4 202.0,12.4 201.5,12.4 201.0,12.4 200.5,12.4 200.0,12.4 199.5,12.4 199.0,12.4 198.5,12.4 198.0,12.5 197.5,12.4 197.0,12.5 196.5,12.8 196.0,13.0 195.5,13.0 195.0,12.4 194.5,12.4" fill="#2a4818"/><polygon points="204.0,10.5 204.5,10.6 205.0,10.3 205.5,9.9 205.9,9.0 206.4,8.6 206.9,9.1 207.4,9.6 207.9,10.0 208.3,10.0 208.8,10.1 209.3,10.2 209.8,10.4 209.8,12.6 209.3,12.8 208.8,12.9 208.3,13.0 207.9,13.0 207.4,13.4 206.9,13.9 206.4,14.4 205.9,14.0 205.5,13.1 205.0,12.7 204.5,12.4 204.0,12.5" fill="#2a4818"/><polygon points="210.5,10.6 211.0,10.6 211.5,10.0 212.0,10.2 212.5,10.4 213.0,10.2 213.5,10.6 214.0,10.4 214.5,10.6 215.0,10.5 215.5,10.6 216.0,10.6 216.5,10.6 217.0,10.6 217.5,10.6 218.0,10.6 218.5,10.6 219.0,10.6 219.5,10.6 220.0,10.6 220.5,10.6 221.0,10.6 221.5,10.6 221.5,12.4 221.0,12.4 220.5,12.4 220.0,12.4 219.5,12.4 219.0,12.4 218.5,12.4 218.0,12.4 217.5,12.4 217.0,12.4 216.5,12.4 216.0,12.4 215.5,12.4 215.0,12.5 214.5,12.4 214.0,12.6 213.5,12.4 213.0,12.8 212.5,12.6 212.0,12.8 211.5,13.0 211.0,12.4 210.5,12.4" fill="#2a4818"/><polygon points="285.9,10.6 286.4,10.5 286.9,10.0 287.4,9.8 287.9,9.3 288.4,9.4 288.9,9.0 289.4,8.7 290.0,8.0 290.5,9.0 291.0,9.3 291.5,9.5 292.0,9.9 292.5,10.1 293.0,10.3 293.5,10.1 293.5,12.9 293.0,12.7 292.5,12.9 292.0,13.1 291.5,13.5 291.0,13.7 290.5,14.0 290.0,15.0 289.4,14.3 288.9,14.0 288.4,13.6 287.9,13.7 287.4,13.2 286.9,13.0 286.4,12.5 285.9,12.4" fill="#2a4818"/><polygon points="293.5,10.6 294.0,10.3 294.5,9.8 295.1,10.2 295.6,10.1 296.1,10.3 296.6,10.6 297.2,10.5 297.7,10.6 298.2,10.6 298.2,12.4 297.7,12.4 297.2,12.5 296.6,12.4 296.1,12.7 295.6,12.9 295.1,12.8 294.5,13.2 294.0,12.7 293.5,12.4" fill="#2a4818"/><polygon points="298.2,10.6 298.7,10.6 299.2,10.6 299.7,10.4 300.1,10.5 300.6,10.6 301.1,10.6 301.6,10.6 302.1,10.6 302.5,10.6 303.0,10.6 303.5,10.6 304.0,10.6 304.0,12.4 303.5,12.4 303.0,12.4 302.5,12.4 302.1,12.4 301.6,12.4 301.1,12.4 300.6,12.4 300.1,12.5 299.7,12.6 299.2,12.4 298.7,12.4 298.2,12.4" fill="#2a4818"/><polygon points="321.5,10.6 322.0,10.6 322.5,10.6 323.0,10.1 323.5,9.6 324.0,9.9 324.5,10.2 325.0,10.5 325.5,10.5 326.0,10.6 326.5,10.6 327.0,10.6 327.5,10.6 327.5,12.4 327.0,12.4 326.5,12.4 326.0,12.4 325.5,12.5 325.0,12.5 324.5,12.8 324.0,13.1 323.5,13.4 323.0,12.9 322.5,12.4 322.0,12.4 321.5,12.4" fill="#2a4818"/><polygon points="349.5,10.6 350.0,10.6 350.5,10.4 351.0,10.3 351.5,9.7 352.0,9.7 352.5,9.2 353.0,9.1 353.5,8.5 354.1,8.6 354.6,9.2 355.1,8.8 355.6,9.2 356.1,9.1 356.6,9.5 357.1,9.6 357.6,9.9 358.1,9.8 358.6,10.0 359.1,10.0 359.6,9.9 360.1,10.2 360.6,10.2 361.1,9.9 361.6,10.1 362.1,10.1 362.6,10.3 363.2,10.1 363.7,10.3 364.2,10.4 364.7,10.3 365.2,10.3 365.7,10.3 366.2,10.5 366.7,10.3 367.2,10.5 367.2,12.5 366.7,12.7 366.2,12.5 365.7,12.7 365.2,12.7 364.7,12.7 364.2,12.6 363.7,12.7 363.2,12.9 362.6,12.7 362.1,12.9 361.6,12.9 361.1,13.1 360.6,12.8 360.1,12.8 359.6,13.1 359.1,13.0 358.6,13.0 358.1,13.2 357.6,13.1 357.1,13.4 356.6,13.5 356.1,13.9 355.6,13.8 355.1,14.2 354.6,13.8 354.1,14.4 353.5,14.5 353.0,13.9 352.5,13.8 352.0,13.3 351.5,13.3 351.0,12.7 350.5,12.6 350.0,12.4 349.5,12.4" fill="#2a4818"/><polygon points="380.1,10.6 380.6,10.6 381.1,10.6 381.6,10.4 382.2,10.1 382.7,9.7 383.2,9.5 383.7,9.0 384.2,10.5 384.2,12.5 383.7,14.0 383.2,13.5 382.7,13.3 382.2,12.9 381.6,12.6 381.1,12.4 380.6,12.4 380.1,12.4" fill="#2a4818"/><polygon points="394.5,10.6 395.0,10.6 395.5,10.6 396.0,10.3 396.5,10.3 397.0,10.4 397.5,10.6 398.0,10.6 398.5,10.6 399.0,10.6 399.5,10.6 400.0,10.6 400.5,10.6 400.5,12.4 400.0,12.4 399.5,12.4 399.0,12.4 398.5,12.4 398.0,12.4 397.5,12.4 397.0,12.6 396.5,12.7 396.0,12.7 395.5,12.4 395.0,12.4 394.5,12.4" fill="#2a4818"/><polygon points="432.8,9.9 433.3,5.5 433.8,6.9 434.3,6.3 434.9,6.8 435.4,8.2 435.9,8.0 436.4,8.7 436.9,8.1 437.4,8.9 437.9,8.8 438.4,8.8 439.0,8.9 439.5,9.2 440.0,9.6 440.5,9.5 440.5,13.5 440.0,13.4 439.5,13.8 439.0,14.1 438.4,14.2 437.9,14.2 437.4,14.1 436.9,14.9 436.4,14.3 435.9,15.0 435.4,14.8 434.9,16.2 434.3,16.7 433.8,16.1 433.3,17.5 432.8,13.1" fill="#2a4818"/><polygon points="441.0,10.6 441.4,10.4 441.9,10.6 442.3,10.6 442.3,12.4 441.9,12.4 441.4,12.6 441.0,12.4" fill="#2a4818"/><polygon points="447.5,10.6 448.0,9.5 448.5,10.6 448.5,12.4 448.0,13.5 447.5,12.4" fill="#2a4818"/><polygon points="451.8,9.7 452.3,9.3 452.8,8.7 453.3,8.1 453.8,7.2 454.3,5.8 454.8,4.6 455.3,6.0 455.8,7.4 456.3,7.6 456.8,8.2 457.3,9.1 457.8,8.8 458.3,9.5 458.3,13.5 457.8,14.2 457.3,13.9 456.8,14.8 456.3,15.4 455.8,15.6 455.3,17.0 454.8,18.4 454.3,17.2 453.8,15.8 453.3,14.9 452.8,14.3 452.3,13.7 451.8,13.3" fill="#2a4818"/><polygon points="464.7,9.9 465.2,7.2 465.7,6.4 466.2,6.8 466.8,7.0 467.3,7.4 467.8,8.3 468.3,8.9 468.8,9.0 469.3,8.4 469.8,9.1 470.3,9.3 470.9,9.5 471.4,9.4 471.9,9.5 472.4,9.3 472.9,9.7 472.9,13.3 472.4,13.7 471.9,13.5 471.4,13.6 470.9,13.5 470.3,13.7 469.8,13.9 469.3,14.6 468.8,14.0 468.3,14.1 467.8,14.7 467.3,15.6 466.8,16.0 466.2,16.2 465.7,16.6 465.2,15.8 464.7,13.1" fill="#2a4818"/><polygon points="474.1,10.6 474.6,10.6 475.1,10.4 475.6,10.3 476.2,10.5 476.7,10.6 477.2,10.6 477.7,10.6 478.2,10.6 478.2,12.4 477.7,12.4 477.2,12.4 476.7,12.4 476.2,12.5 475.6,12.7 475.1,12.6 474.6,12.4 474.1,12.4" fill="#2a4818"/><polygon points="494.0,10.4 494.5,10.5 495.0,10.4 495.5,10.2 496.0,10.0 496.5,10.0 497.0,9.7 497.5,9.4 498.0,9.1 498.5,8.8 499.0,8.8 499.5,8.4 500.0,8.8 500.5,8.0 501.0,8.0 501.5,8.7 502.0,9.0 502.5,9.2 503.0,9.3 503.5,9.3 504.0,9.4 504.5,9.7 505.0,9.4 505.5,9.4 506.0,9.9 506.5,9.7 507.0,9.9 507.5,9.9 508.0,10.0 508.5,10.1 509.0,10.0 509.5,10.0 510.0,10.3 510.5,10.3 511.0,10.4 511.5,10.3 511.5,12.7 511.0,12.6 510.5,12.7 510.0,12.7 509.5,13.0 509.0,13.0 508.5,12.9 508.0,13.0 507.5,13.1 507.0,13.1 506.5,13.3 506.0,13.1 505.5,13.6 505.0,13.6 504.5,13.3 504.0,13.6 503.5,13.7 503.0,13.7 502.5,13.8 502.0,14.0 501.5,14.3 501.0,15.0 500.5,15.0 500.0,14.2 499.5,14.6 499.0,14.2 498.5,14.2 498.0,13.9 497.5,13.6 497.0,13.3 496.5,13.0 496.0,13.0 495.5,12.8 495.0,12.6 494.5,12.5 494.0,12.6" fill="#2a4818"/><polygon points="515.5,10.6 515.9,10.5 516.3,10.6 516.3,12.4 515.9,12.5 515.5,12.4" fill="#2a4818"/><polygon points="534.5,10.6 535.0,10.2 535.5,9.4 536.0,9.6 536.5,9.9 537.0,10.1 537.5,10.3 538.0,10.5 538.5,10.6 538.5,12.4 538.0,12.5 537.5,12.7 537.0,12.9 536.5,13.1 536.0,13.4 535.5,13.6 535.0,12.8 534.5,12.4" fill="#2a4818"/><polygon points="539.5,10.6 540.0,10.6 540.5,10.6 540.5,12.4 540.0,12.4 539.5,12.4" fill="#2a4818"/></svg>
<div class="r" style="left:681.2px;top:114.5px;width:3px;height:437px;background:#06067a;"></div>
<div class="r" style="left:1009px;top:114px;width:13px;height:459px;background:#c4c4c4;"></div>
<div class="r" style="left:1008px;top:114px;width:1px;height:459px;background:#f4f4f4;"></div>
<div class="r" style="left:1009px;top:116px;width:13px;height:13px;background:#ececec;border-left:1px solid #6a6a6a;border-right:1px solid #6a6a6a;border-top:1px solid #f8f8f8;"></div>
<svg class="r" style="left:1011px;top:118px;" width="10" height="10" viewBox="0 0 10 10"><g transform="rotate(180 5 5) translate(1 2)"><path d="M1 1.6 L2.5 0.8 L4 1.8 L5.5 0.8 L7 1.6 L4 5.2 Z" fill="#000" stroke="#000" stroke-width="0.7" stroke-linejoin="round"/></g></svg>
<div class="r" style="left:1009px;top:128.5px;width:13px;height:126px;background:#e8e8e8;border:1px solid #5e5e5e;box-shadow:inset 1px 1px 0 #fafafa;"></div>
<svg class="r" style="left:1011px;top:182px;" width="10" height="24" viewBox="0 0 10 24"><path d="M1 11 L8 2 M1 16 L8 7 M1 21 L8 12" stroke="#b4b4b4" stroke-width="0.9"/></svg>
<div class="r" style="left:1008px;top:560.5px;width:14px;height:12.5px;background:#ececec;border-bottom:1px solid #5e5e5e;border-right:1px solid #5e5e5e;"></div>
<svg class="r" style="left:1011px;top:562px;" width="10" height="10" viewBox="0 0 10 10"><g transform="rotate(0 5 5) translate(1 2)"><path d="M1 1.6 L2.5 0.8 L4 1.8 L5.5 0.8 L7 1.6 L4 5.2 Z" fill="#000" stroke="#000" stroke-width="0.7" stroke-linejoin="round"/></g></svg>
<div class="r" style="left:455px;top:573.5px;width:554px;height:12.5px;background:#c4c4c4;"></div>
<div class="r" style="left:455.5px;top:573.5px;width:13px;height:12.5px;background:#ececec;border:1px solid #5e5e5e;"></div>
<svg class="r" style="left:457px;top:575px;" width="10" height="10" viewBox="0 0 10 10"><g transform="rotate(90 5 5) translate(1 2)"><path d="M1 1.6 L2.5 0.8 L4 1.8 L5.5 0.8 L7 1.6 L4 5.2 Z" fill="#000" stroke="#000" stroke-width="0.7" stroke-linejoin="round"/></g></svg>
<div class="r" style="left:508px;top:573.5px;width:33px;height:12.5px;background:#e8e8e8;border:1px solid #5e5e5e;box-shadow:inset 1px 1px 0 #fafafa;"></div>
<svg class="r" style="left:515px;top:575px;" width="18" height="9" viewBox="0 0 18 9"><path d="M2 8 L7 1 M6 8 L11 1 M10 8 L15 1" stroke="#c0c0c0" stroke-width="0.8"/></svg>
<div class="r" style="left:996.5px;top:573.5px;width:12.5px;height:12.5px;background:#ececec;border:1px solid #5e5e5e;"></div>
<svg class="r" style="left:998px;top:575px;" width="10" height="10" viewBox="0 0 10 10"><g transform="rotate(-90 5 5) translate(1 2)"><path d="M1 1.6 L2.5 0.8 L4 1.8 L5.5 0.8 L7 1.6 L4 5.2 Z" fill="#000" stroke="#000" stroke-width="0.7" stroke-linejoin="round"/></g></svg>
<div class="r" style="left:1009px;top:573px;width:13px;height:13.5px;background:#e4e4e4;"></div>
<div class="r" style="left:1022px;top:76px;width:1px;height:511px;background:#f2f2f2;"></div>
<div class="r" style="left:1023px;top:76px;width:1px;height:512px;background:#7a7a7a;"></div>
<div class="r" style="left:453px;top:587px;width:571px;height:1px;background:#6a6a6a;"></div>
<div class="r" style="left:1007px;top:551px;width:4px;height:9px;background:#636363;"></div>
<div class="r" style="left:1007px;top:559px;width:4px;height:1.2px;background:#222;"></div>
<div class="r" style="left:2px;top:593px;width:929px;height:17px;background:none;border-top:1px solid #9a9a9a;border-left:1px solid #9a9a9a;border-bottom:1px solid #f8f8f8;border-right:1px solid #f8f8f8;"></div>
<div class="t" style="left:9.60px;top:594.62px;font-size:11.2px;line-height:15px;font-weight:normal;color:#111;font-family:'Liberation Sans', sans-serif;">Ready.</div>
<div class="r" style="left:933px;top:591px;width:88px;height:21px;background:#e6e6e6;border-top:1px solid #b0b0b0;border-left:1px solid #b0b0b0;"></div>
<div class="r" style="left:935.5px;top:591.5px;width:51px;height:20px;background:#c4c4c4;"></div>
<div class="r" style="left:933.5px;top:592px;width:2px;height:19px;background:#8090d8;"></div>
<div class="t" style="left:995.00px;top:594.82px;font-size:11.2px;line-height:15px;font-weight:normal;color:#111;font-family:'Liberation Sans', sans-serif;">0%</div>
<div class="r" style="left:469px;top:201px;width:368.5px;height:1px;background:#fafafa;"></div>
<div class="r" style="left:469.5px;top:202.5px;width:367.5px;height:93px;background:#e8e8e8;border:1.5px solid #1e1e1e;"></div>
<div class="r" style="left:471px;top:204px;width:365px;height:12px;background:#202030;background:repeating-linear-gradient(0deg,rgba(255,255,255,0.05) 0 1px,rgba(0,0,0,0) 1px 2px),linear-gradient(90deg,#16161e 0%,#262636 50%,#4a4a60 80%,#5a5a72 100%);"></div>
<div class="r" style="left:471px;top:216px;width:365px;height:1px;background:#222;"></div>
<div class="r" style="left:471.5px;top:204.5px;width:12.5px;height:11.5px;background:#8e8e8e;border-right:1px solid #555;"></div>
<div class="r" style="left:474.5px;top:210px;width:7px;height:2.5px;background:#555;border-radius:1px;"></div>
<div class="r" style="left:822.5px;top:204px;width:13.5px;height:12px;background:#9a9a9a;box-shadow:inset 1px 1px 0 #b8b8b8;"></div>
<svg class="r" style="left:825px;top:206px;" width="10" height="8" viewBox="0 0 10 8"><path d="M1.5 0.8 L8 7 M8 0.8 L1.5 7" stroke="#4a4a4a" stroke-width="0.9"/></svg>
<div class="t" style="left:485.40px;top:205.69px;font-size:8.7px;line-height:11px;font-weight:normal;color:#dcdcdc;font-family:'Liberation Mono', monospace;-webkit-text-stroke:0;">Rosegarden Transport - Rosegarden</div>
<div class="r" style="left:471px;top:217px;width:364.5px;height:1px;background:#f8f8f8;"></div>
<div class="r" style="left:471px;top:291.5px;width:364.5px;height:1px;background:#9a9a9a;"></div>
<div class="r" style="left:471px;top:292.5px;width:364.5px;height:1px;background:#f4f4f4;"></div>
<div class="r" style="left:474.4px;top:221.3px;width:20.700000000000045px;height:20.69999999999999px;background:#e6e6e6;border:1px solid #7c7c7c;box-shadow:inset 1px 1px 0 #fbfbfb;"></div>
<div class="r" style="left:474.4px;top:242px;width:20.700000000000045px;height:19.5px;background:#e6e6e6;border:1px solid #7c7c7c;box-shadow:inset 1px 1px 0 #fbfbfb;"></div>
<div class="r" style="left:474.4px;top:266.4px;width:20.700000000000045px;height:21.200000000000045px;background:#fafafa;border:1px solid #7c7c7c;box-shadow:inset 1px 1px 0 #fbfbfb;"></div>
<svg class="r" style="left:477px;top:224px;" width="16" height="16" viewBox="0 0 16 16"><rect x="4.5" y="4" width="1.8" height="8" fill="#111"/><rect x="9.5" y="4" width="1.8" height="8" fill="#111"/></svg>
<svg class="r" style="left:477px;top:244px;" width="16" height="16" viewBox="0 0 16 16"><path d="M3 8 L7 4.5 V11.5 Z" fill="#111"/><path d="M6 8 H10" stroke="#111" stroke-width="2"/><rect x="11" y="4" width="1.8" height="8" fill="#111"/></svg>
<svg class="r" style="left:477px;top:269px;" width="16" height="16" viewBox="0 0 16 16"><path d="M4.3 10.3 L8 6 L11.7 10.3 Z" fill="none" stroke="#111" stroke-width="1.5" stroke-linejoin="round"/></svg>
<div class="r" style="left:498.4px;top:223.2px;width:194.3px;height:61.1px;background:#000;"></div>
<svg class="r" style="left:498px;top:223px;" width="195" height="62" viewBox="0 0 195 62"><line x1="23.24" y1="8.40" x2="33.94" y2="8.40" stroke="#c4d2f6" stroke-width="1.6" stroke-linecap="butt"/><line x1="34.31" y1="9.30" x2="32.75" y2="20.05" stroke="#c4d2f6" stroke-width="2.8" stroke-linecap="butt"/><line x1="34.31" y1="10.80" x2="32.75" y2="18.55" stroke="#5a6890" stroke-width="0.7" stroke-linecap="butt"/><line x1="32.49" y1="21.85" x2="30.93" y2="32.60" stroke="#c4d2f6" stroke-width="2.8" stroke-linecap="butt"/><line x1="32.49" y1="23.35" x2="30.93" y2="31.10" stroke="#5a6890" stroke-width="0.7" stroke-linecap="butt"/><line x1="19.10" y1="33.50" x2="29.80" y2="33.50" stroke="#c4d2f6" stroke-width="1.6" stroke-linecap="butt"/><line x1="20.29" y1="21.85" x2="18.73" y2="32.60" stroke="#c4d2f6" stroke-width="2.8" stroke-linecap="butt"/><line x1="20.29" y1="23.35" x2="18.73" y2="31.10" stroke="#5a6890" stroke-width="0.7" stroke-linecap="butt"/><line x1="22.11" y1="9.30" x2="20.55" y2="20.05" stroke="#c4d2f6" stroke-width="2.8" stroke-linecap="butt"/><line x1="22.11" y1="10.80" x2="20.55" y2="18.55" stroke="#5a6890" stroke-width="0.7" stroke-linecap="butt"/><line x1="40.74" y1="8.40" x2="51.44" y2="8.40" stroke="#c4d2f6" stroke-width="1.6" stroke-linecap="butt"/><line x1="51.81" y1="9.30" x2="50.25" y2="20.05" stroke="#c4d2f6" stroke-width="2.8" stroke-linecap="butt"/><line x1="51.81" y1="10.80" x2="50.25" y2="18.55" stroke="#5a6890" stroke-width="0.7" stroke-linecap="butt"/><line x1="49.99" y1="21.85" x2="48.43" y2="32.60" stroke="#c4d2f6" stroke-width="2.8" stroke-linecap="butt"/><line x1="49.99" y1="23.35" x2="48.43" y2="31.10" stroke="#5a6890" stroke-width="0.7" stroke-linecap="butt"/><line x1="36.60" y1="33.50" x2="47.30" y2="33.50" stroke="#c4d2f6" stroke-width="1.6" stroke-linecap="butt"/><line x1="37.79" y1="21.85" x2="36.23" y2="32.60" stroke="#c4d2f6" stroke-width="2.8" stroke-linecap="butt"/><line x1="37.79" y1="23.35" x2="36.23" y2="31.10" stroke="#5a6890" stroke-width="0.7" stroke-linecap="butt"/><line x1="39.61" y1="9.30" x2="38.05" y2="20.05" stroke="#c4d2f6" stroke-width="2.8" stroke-linecap="butt"/><line x1="39.61" y1="10.80" x2="38.05" y2="18.55" stroke="#5a6890" stroke-width="0.7" stroke-linecap="butt"/><line x1="62.24" y1="8.40" x2="72.94" y2="8.40" stroke="#c4d2f6" stroke-width="1.6" stroke-linecap="butt"/><line x1="73.31" y1="9.30" x2="71.75" y2="20.05" stroke="#c4d2f6" stroke-width="2.8" stroke-linecap="butt"/><line x1="73.31" y1="10.80" x2="71.75" y2="18.55" stroke="#5a6890" stroke-width="0.7" stroke-linecap="butt"/><line x1="71.49" y1="21.85" x2="69.93" y2="32.60" stroke="#c4d2f6" stroke-width="2.8" stroke-linecap="butt"/><line x1="71.49" y1="23.35" x2="69.93" y2="31.10" stroke="#5a6890" stroke-width="0.7" stroke-linecap="butt"/><line x1="58.10" y1="33.50" x2="68.80" y2="33.50" stroke="#c4d2f6" stroke-width="1.6" stroke-linecap="butt"/><line x1="59.29" y1="21.85" x2="57.73" y2="32.60" stroke="#c4d2f6" stroke-width="2.8" stroke-linecap="butt"/><line x1="59.29" y1="23.35" x2="57.73" y2="31.10" stroke="#5a6890" stroke-width="0.7" stroke-linecap="butt"/><line x1="61.11" y1="9.30" x2="59.55" y2="20.05" stroke="#c4d2f6" stroke-width="2.8" stroke-linecap="butt"/><line x1="61.11" y1="10.80" x2="59.55" y2="18.55" stroke="#5a6890" stroke-width="0.7" stroke-linecap="butt"/><line x1="79.74" y1="8.40" x2="90.44" y2="8.40" stroke="#c4d2f6" stroke-width="1.6" stroke-linecap="butt"/><line x1="90.81" y1="9.30" x2="89.25" y2="20.05" stroke="#c4d2f6" stroke-width="2.8" stroke-linecap="butt"/><line x1="90.81" y1="10.80" x2="89.25" y2="18.55" stroke="#5a6890" stroke-width="0.7" stroke-linecap="butt"/><line x1="88.99" y1="21.85" x2="87.43" y2="32.60" stroke="#c4d2f6" stroke-width="2.8" stroke-linecap="butt"/><line x1="88.99" y1="23.35" x2="87.43" y2="31.10" stroke="#5a6890" stroke-width="0.7" stroke-linecap="butt"/><line x1="75.60" y1="33.50" x2="86.30" y2="33.50" stroke="#c4d2f6" stroke-width="1.6" stroke-linecap="butt"/><line x1="76.79" y1="21.85" x2="75.23" y2="32.60" stroke="#c4d2f6" stroke-width="2.8" stroke-linecap="butt"/><line x1="76.79" y1="23.35" x2="75.23" y2="31.10" stroke="#5a6890" stroke-width="0.7" stroke-linecap="butt"/><line x1="78.61" y1="9.30" x2="77.05" y2="20.05" stroke="#c4d2f6" stroke-width="2.8" stroke-linecap="butt"/><line x1="78.61" y1="10.80" x2="77.05" y2="18.55" stroke="#5a6890" stroke-width="0.7" stroke-linecap="butt"/><line x1="101.24" y1="8.40" x2="111.94" y2="8.40" stroke="#c4d2f6" stroke-width="1.6" stroke-linecap="butt"/><line x1="112.31" y1="9.30" x2="110.75" y2="20.05" stroke="#c4d2f6" stroke-width="2.8" stroke-linecap="butt"/><line x1="112.31" y1="10.80" x2="110.75" y2="18.55" stroke="#5a6890" stroke-width="0.7" stroke-linecap="butt"/><line x1="99.42" y1="20.95" x2="109.62" y2="20.95" stroke="#c4d2f6" stroke-width="1.6" stroke-linecap="butt"/><line x1="98.29" y1="21.85" x2="96.73" y2="32.60" stroke="#c4d2f6" stroke-width="2.8" stroke-linecap="butt"/><line x1="98.29" y1="23.35" x2="96.73" y2="31.10" stroke="#5a6890" stroke-width="0.7" stroke-linecap="butt"/><line x1="97.10" y1="33.50" x2="107.80" y2="33.50" stroke="#c4d2f6" stroke-width="1.6" stroke-linecap="butt"/><line x1="130.81" y1="9.30" x2="129.25" y2="20.05" stroke="#c4d2f6" stroke-width="2.8" stroke-linecap="butt"/><line x1="130.81" y1="10.80" x2="129.25" y2="18.55" stroke="#5a6890" stroke-width="0.7" stroke-linecap="butt"/><line x1="128.99" y1="21.85" x2="127.43" y2="32.60" stroke="#c4d2f6" stroke-width="2.8" stroke-linecap="butt"/><line x1="128.99" y1="23.35" x2="127.43" y2="31.10" stroke="#5a6890" stroke-width="0.7" stroke-linecap="butt"/><rect x="52.4" y="16.30000000000001" width="2.6" height="1.6" fill="#c4d2f6"/><rect x="51.4" y="24.0" width="2.6" height="1.6" fill="#c4d2f6"/><rect x="91.6" y="16.30000000000001" width="2.6" height="1.6" fill="#c4d2f6"/><rect x="90.6" y="24.0" width="2.6" height="1.6" fill="#c4d2f6"/><line x1="139.12" y1="15.60" x2="147.12" y2="15.60" stroke="#c4d2f6" stroke-width="1.3" stroke-linecap="butt"/><line x1="147.49" y1="16.50" x2="146.49" y2="23.40" stroke="#c4d2f6" stroke-width="2.0" stroke-linecap="butt"/><line x1="137.86" y1="24.30" x2="145.36" y2="24.30" stroke="#c4d2f6" stroke-width="1.3" stroke-linecap="butt"/><line x1="136.73" y1="25.20" x2="135.73" y2="32.10" stroke="#c4d2f6" stroke-width="2.0" stroke-linecap="butt"/><line x1="136.10" y1="33.00" x2="144.10" y2="33.00" stroke="#c4d2f6" stroke-width="1.3" stroke-linecap="butt"/><line x1="152.32" y1="15.60" x2="160.32" y2="15.60" stroke="#c4d2f6" stroke-width="1.3" stroke-linecap="butt"/><line x1="160.69" y1="16.50" x2="159.69" y2="23.40" stroke="#c4d2f6" stroke-width="2.0" stroke-linecap="butt"/><line x1="159.43" y1="25.20" x2="158.43" y2="32.10" stroke="#c4d2f6" stroke-width="2.0" stroke-linecap="butt"/><line x1="149.30" y1="33.00" x2="157.30" y2="33.00" stroke="#c4d2f6" stroke-width="1.3" stroke-linecap="butt"/><line x1="149.93" y1="25.20" x2="148.93" y2="32.10" stroke="#c4d2f6" stroke-width="2.0" stroke-linecap="butt"/><line x1="151.19" y1="16.50" x2="150.19" y2="23.40" stroke="#c4d2f6" stroke-width="2.0" stroke-linecap="butt"/><line x1="151.06" y1="24.30" x2="158.56" y2="24.30" stroke="#c4d2f6" stroke-width="1.3" stroke-linecap="butt"/><line x1="164.39" y1="16.50" x2="163.39" y2="23.40" stroke="#c4d2f6" stroke-width="2.0" stroke-linecap="butt"/><line x1="164.26" y1="24.30" x2="171.76" y2="24.30" stroke="#c4d2f6" stroke-width="1.3" stroke-linecap="butt"/><line x1="173.89" y1="16.50" x2="172.89" y2="23.40" stroke="#c4d2f6" stroke-width="2.0" stroke-linecap="butt"/><line x1="172.63" y1="25.20" x2="171.63" y2="32.10" stroke="#c4d2f6" stroke-width="2.0" stroke-linecap="butt"/><line x1="178.72" y1="15.60" x2="186.72" y2="15.60" stroke="#c4d2f6" stroke-width="1.3" stroke-linecap="butt"/><line x1="187.09" y1="16.50" x2="186.09" y2="23.40" stroke="#c4d2f6" stroke-width="2.0" stroke-linecap="butt"/><line x1="185.83" y1="25.20" x2="184.83" y2="32.10" stroke="#c4d2f6" stroke-width="2.0" stroke-linecap="butt"/></svg>
<div class="t" style="left:504.00px;top:270.49px;font-size:8.7px;line-height:11px;font-weight:normal;color:#b4bcd8;font-family:'Liberation Sans', sans-serif;font-style:italic;">SIG</div>
<div class="t" style="left:533.30px;top:269.08px;font-size:9.0px;line-height:12px;font-weight:bold;color:#c8d0e6;font-family:'Liberation Sans', sans-serif;">4/4</div>
<div class="t" style="left:556.10px;top:270.49px;font-size:8.7px;line-height:11px;font-weight:normal;color:#b4bcd8;font-family:'Liberation Sans', sans-serif;font-style:italic;">DIV</div>
<div class="t" style="left:583.40px;top:269.08px;font-size:9.0px;line-height:12px;font-weight:bold;color:#c8d0e6;font-family:'Liberation Sans', sans-serif;">/16</div>
<div class="t" style="left:606.60px;top:270.49px;font-size:8.7px;line-height:11px;font-weight:normal;color:#b4bcd8;font-family:'Liberation Sans', sans-serif;font-style:italic;">TEMPC</div>
<div class="t" style="left:650.40px;top:268.98px;font-size:9.3px;line-height:12px;font-weight:bold;color:#d0d6ea;font-family:'Liberation Sans', sans-serif;">115.000</div>
<div class="r" style="left:697.3px;top:221.3px;width:35.90000000000009px;height:32.099999999999994px;background:#e6e6e6;border:1px solid #7c7c7c;box-shadow:inset 1px 1px 0 #fbfbfb;"></div>
<div class="r" style="left:735.3px;top:221.3px;width:56.5px;height:32.099999999999994px;background:#fafafa;border:1px solid #7c7c7c;box-shadow:inset 1px 1px 0 #fbfbfb;"></div>
<div class="r" style="left:793.4px;top:221.3px;width:35.5px;height:32.099999999999994px;background:#e6e6e6;border:1px solid #7c7c7c;box-shadow:inset 1px 1px 0 #fbfbfb;"></div>
<div class="r" style="left:697.3px;top:255.3px;width:35.90000000000009px;height:32.30000000000001px;background:#e6e6e6;border:1px solid #7c7c7c;box-shadow:inset 1px 1px 0 #fbfbfb;"></div>
<div class="r" style="left:735.3px;top:255.3px;width:56.5px;height:32.30000000000001px;background:#e6e6e6;border:1px solid #7c7c7c;box-shadow:inset 1px 1px 0 #fbfbfb;"></div>
<div class="r" style="left:793.4px;top:255.3px;width:35.5px;height:32.30000000000001px;background:#e6e6e6;border:1px solid #7c7c7c;box-shadow:inset 1px 1px 0 #fbfbfb;"></div>
<svg class="r" style="left:705px;top:226px;" width="20" height="22" viewBox="0 0 20 22"><path d="M4.5 11 L10 4 V18 Z M9.5 11 L15 4 V18 Z" fill="#111"/></svg>
<svg class="r" style="left:750px;top:226px;" width="28" height="22" viewBox="0 0 28 22"><path d="M3.5 4.5 L14 11 L3.5 17.5 Z" fill="#111"/><rect x="15.5" y="5" width="3" height="12" fill="#111"/><rect x="20.5" y="5" width="3" height="12" fill="#111"/></svg>
<svg class="r" style="left:801px;top:226px;" width="20" height="22" viewBox="0 0 20 22"><path d="M5 4 L10.5 11 L5 18 Z M10 4 L15.5 11 L10 18 Z" fill="#111"/></svg>
<svg class="r" style="left:705px;top:260px;" width="20" height="22" viewBox="0 0 20 22"><rect x="6" y="4" width="2" height="14" fill="#111"/><path d="M8 11 L14 5 V17 Z" fill="#111"/></svg>
<svg class="r" style="left:753px;top:260px;" width="20" height="22" viewBox="0 0 20 22"><rect x="6.2" y="6" width="8.6" height="10.5" fill="#111"/></svg>
<svg class="r" style="left:801px;top:260px;" width="20" height="22" viewBox="0 0 20 22"><path d="M6 5 L12 11 L6 17 Z" fill="#111"/><rect x="12" y="4" width="2" height="14" fill="#111"/></svg>
</body></html>
